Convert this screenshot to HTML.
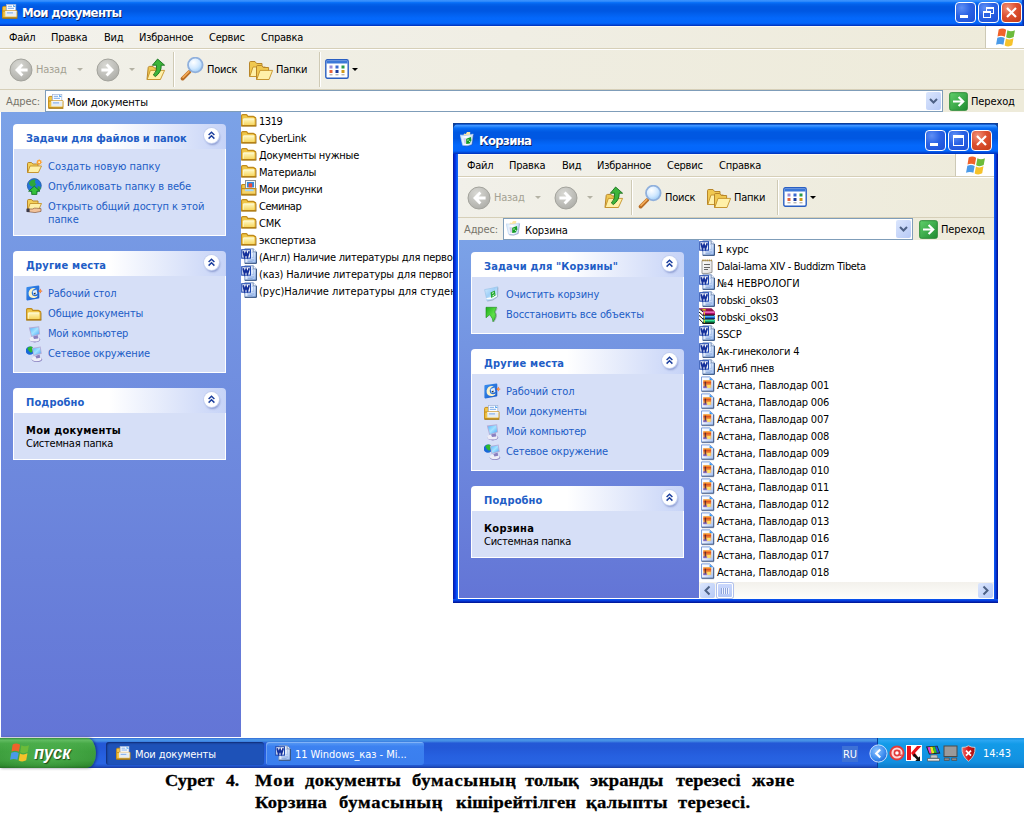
<!DOCTYPE html>
<html lang="ru">
<head>
<meta charset="utf-8">
<title>Мои документы</title>
<style>
*{box-sizing:border-box;margin:0;padding:0}
html,body{width:1024px;height:824px;overflow:hidden;background:#fff}
body{position:relative;font-family:"DejaVu Sans Condensed","Liberation Sans",sans-serif;font-size:11px;letter-spacing:-.12px;line-height:13px;color:#000}
.fl{letter-spacing:-.25px}
.menu span,.tool span{letter-spacing:-.23px}
.abs{position:absolute}
.nw{white-space:nowrap}
svg{display:block}
i{display:block;position:absolute}
/* window chrome */
.title{position:absolute;left:0;top:0;right:0;background:linear-gradient(#3f96ff 0%,#2a86fb 6%,#0870f8 10%,#0462ea 16%,#0058e2 26%,#0057e2 42%,#0260ee 55%,#0468fb 70%,#0366fb 89%,#0250e0 94%,#0038c4 98%,#0038c4 100%)}
.title.t2{border-radius:7px 7px 0 0;background:linear-gradient(#0a3f9a 0%,#0a3f9a 3%,#1862dc 5%,#3f96ff 8%,#2a86fb 12%,#0870f8 16%,#0462ea 22%,#0058e2 30%,#0057e2 50%,#0260ee 60%,#0468fb 72%,#0366fb 90%,#0250e0 94%,#0038c4 98%,#0038c4 100%)}
.title .tt{position:absolute;color:#fff;font-family:"DejaVu Sans Condensed","Liberation Sans",sans-serif;font-weight:bold;font-size:13px;letter-spacing:-.66px;line-height:15px;white-space:nowrap;text-shadow:1px 1px 0 #0a246a}
.win2{background:#0831d9}
.bl{left:0;top:20px;bottom:0;width:5px;background:linear-gradient(90deg,#00218f 0%,#0325d2 25%,#0536e2 50%,#0a58f2 75%,#1468fa 100%)}
.br{right:0;top:20px;bottom:0;width:4px;background:linear-gradient(90deg,#0a5cf5 0%,#0742e2 35%,#0325b8 70%,#00138c 100%)}
.bb{left:0;right:0;bottom:0;height:4px;background:linear-gradient(#0a58f2 0%,#0742e2 35%,#0325b8 70%,#00138c 100%)}
.tb{position:absolute;width:21px;height:21px;border:1px solid #fff;border-radius:4px;background:radial-gradient(circle at 30% 25%,#5f8ff5 0%,#2a62e4 45%,#1d4fd6 100%)}
.tb.x{background:radial-gradient(circle at 30% 25%,#f0927a 0%,#dd5030 45%,#c23a16 100%)}
.menu{position:absolute;background:linear-gradient(90deg,#f3f2ec 0%,#f0eee4 50%,#eeebda 100%);border-top:1px solid #fcfbf4;border-bottom:1px solid #d6cfb8}
.menu span{position:absolute;top:4px;white-space:nowrap}
.flag{position:absolute;background:#fff;border-left:1px solid #cdc9b6}
.tool{position:absolute;background:linear-gradient(90deg,#f1f0e9 0%,#efede1 50%,#eeebda 100%);border-top:1px solid #fff;border-bottom:1px solid #d6cfb8}
.sep{width:2px;border-left:1px solid #cfcab5;border-right:1px solid #fff}
.dd{width:0;height:0;border:3px solid transparent;border-top:3px solid #000;border-bottom:0}
.dd.gray2{border-top-color:#b4b2a4}
.addr{position:absolute;background:linear-gradient(90deg,#f1f0e9 0%,#efede1 50%,#eeebda 100%)}
.addr .inp{position:absolute;background:#fff;border:1px solid #7f9db9}
.combo{position:absolute;width:15px;height:18px;border-radius:2px;border:0;background:linear-gradient(135deg,#dbe6fd,#b6c9f6)}
.gray{color:#a3a193}
.gray3{color:#77746a}
/* task pane */
.pane{position:absolute;background:linear-gradient(#7ba2e7,#6375d6);border-left:1px solid #fff}
.box{position:absolute}
.box .hd{position:absolute;left:0;top:0;right:0;height:25px;border-radius:4px 4px 0 0;background:linear-gradient(90deg,#fff 0%,#fff 45%,#c6d3f7 100%);color:#215dc6;font-weight:bold;font-size:11px}
.box .hd b{letter-spacing:.05px;position:absolute;left:13px;top:8px;white-space:nowrap}
.box .bd{position:absolute;left:0;top:25px;right:0;bottom:0;background:#d6dff7;border:1px solid #fff;border-top:0}
.box .lk{position:absolute;color:#215dc6;white-space:nowrap}
.chev{position:absolute;width:15px;height:15px;border-radius:50%;background:#fff;box-shadow:0 0 0 1px #c4d0f0,1px 2px 2px rgba(60,80,160,.45)}
/* scrollbar */
.hsb{position:absolute;background:linear-gradient(#f3f1ec,#fefefb)}
.sbtn{position:absolute;width:15px;height:15px;border-radius:2px;background:linear-gradient(135deg,#dbe6fd,#b6c9f6);border:0}
.sthumb{position:absolute;height:15px;border-radius:2px;background:linear-gradient(#c9d7fc,#b6c8f6);border:1px solid #fff;box-shadow:0 0 0 1px #b0c0ec}
.sthumb i{left:3px;top:4px;width:8px;height:6px;background:repeating-linear-gradient(90deg,#8ea4dc 0 1px,#eef3ff 1px 2px)}
/* taskbar */
#taskbar{height:30px !important;background:linear-gradient(#3168d5 0%,#4993e6 5%,#4590e6 10%,#2459d6 17%,#2358d6 32%,#2660e0 60%,#2964e2 85%,#2055cc 93%,#1a3aa0 100%)}
.start{position:absolute;left:0;top:0;width:96px;height:30px;border-radius:0 9px 9px 0/0 15px 15px 0;background:radial-gradient(ellipse at 45% 60%,rgba(90,190,90,.55) 0%,rgba(90,190,90,0) 70%),linear-gradient(#2f8f3a 0%,#62bc62 7%,#48aa48 18%,#3c9e3c 45%,#3a9a3a 75%,#2f8a2f 92%,#256f25 100%);box-shadow:1px 0 3px rgba(0,0,40,.5);color:#fff;font-family:"Liberation Sans","DejaVu Sans",sans-serif;font-style:italic;font-weight:bold;font-size:18px;line-height:22px;text-shadow:1px 1px 1px #1a4a1a}
.tbtn{position:absolute;top:4px;height:23px;border-radius:3px;background:linear-gradient(#5a9cf5,#3c81f0 20%,#3a7eee);color:#fff;box-shadow:inset 1px 1px 0 rgba(255,255,255,.25)}
.tbtn.on{background:#1e52b8;box-shadow:inset 1px 1px 2px rgba(0,0,40,.5)}
.tray{position:absolute;top:0;height:30px;background:linear-gradient(#1a8fe0 0%,#2aa6f2 8%,#139be8 20%,#1290e0 80%,#0d78c8 100%);border-left:1px solid #0a3f9a}
#cap{font-family:"Liberation Serif","DejaVu Serif",serif;font-weight:bold;font-size:17.33px;line-height:20px;color:#000}
#cap span{transform-origin:0 0;-webkit-text-stroke:.3px #000}
</style>
</head>
<body>

<!-- main window: Мои документы -->
<div id="w1" class="abs" style="left:0;top:0;width:1024px;height:738px;background:#fff"><div class="title" style="height:26px"><div class="abs" style="left:2px;top:4px;"><svg width="16" height="16" viewBox="0 0 16 16" ><path d="M.6 13.6V3.4Q.6 2.4 1.8 2.4H4.4V13.6Z" fill="#f2c648" stroke="#c48e1c" stroke-width="1"/><rect x="4.4" y=".4" width="9.4" height="8.4" fill="#fff" stroke="#9fb2d6" stroke-width=".7"/><path d="M11.2 .4L13.8 3H11.2Z" fill="#4aa0f0"/><path d="M5.8 2.3H10M5.8 4.3H12" stroke="#78a8e8" stroke-width="1"/><path d="M.7 13.7V7H3.2V6.8H15V13.7Z" fill="#f2c648" stroke="#c48e1c" stroke-width="1"/><rect x="3.3" y="7.1" width="11.2" height="5.4" fill="#e6edf4"/><path d="M3.3 7.3H14.5" stroke="#fff" stroke-width=".8"/><path d="M5 8.9H11" stroke="#78a8e8" stroke-width="1"/><path d="M.4 14.3H15.4" stroke="#a87810" stroke-width="1"/></svg></div><span class="tt" style="left:22px;top:5px">Мои документы</span><div class="tb" style="left:955px;top:2px"><i style="position:absolute;left:4px;top:12px;width:8px;height:3px;background:#fff"></i></div><div class="tb" style="left:978px;top:2px"><i style="position:absolute;left:7px;top:4px;width:8px;height:7px;border:1px solid #fff;border-top-width:2px"></i><i style="position:absolute;left:4px;top:8px;width:8px;height:7px;border:1px solid #fff;border-top-width:2px;background:#2a62e4"></i></div><div class="tb x" style="left:1001px;top:2px"><svg width="19" height="19" viewBox="0 0 19 19" style="position:absolute;left:0;top:0"><path d="M5 5L14 14M14 5L5 14" stroke="#fff" stroke-width="2.2"/></svg></div><i style="right:0;top:0;width:2px;height:26px;background:linear-gradient(90deg,#0a4ad8,#0028a0)"></i></div><div class="menu" style="left:0;top:26px;width:1024px;height:23px"><span style="left:9px">Файл</span><span style="left:51px">Правка</span><span style="left:104px">Вид</span><span style="left:139px">Избранное</span><span style="left:209px">Сервис</span><span style="left:261px">Справка</span></div><div class="flag" style="left:985px;top:26px;width:39px;height:22px"><div class="abs" style="left:9px;top:1px;"><svg width="21" height="21" viewBox="0 0 20 20" ><path d="M3.5 2.4Q7 .6 10.6 2.6L9.4 9.2Q6 7.4 2.4 9Z" fill="#f0622a"/><path d="M11.8 3.2Q15.4 5 19 3L17.8 9.6Q14.2 11.6 10.6 9.8Z" fill="#6cbb3a"/><path d="M2.2 10.2Q5.8 8.6 9.2 10.4L8 17Q4.6 15.2 1 17Z" fill="#4a9ae8"/><path d="M10.4 11Q14 12.8 17.6 10.8L16.4 17.4Q12.8 19.4 9.2 17.6Z" fill="#f6c22a"/></svg></div></div><div class="tool" style="left:0;top:49px;width:1024px;height:41px"><div class="abs" style="left:9px;top:8px;"><svg width="24" height="24" viewBox="0 0 24 24" ><radialGradient id="bk3" cx=".4" cy=".3" r=".8"><stop offset="0" stop-color="#d9d9d4"/><stop offset=".6" stop-color="#bdbdb8"/><stop offset="1" stop-color="#a9a9a4"/></radialGradient><circle cx="12" cy="12" r="11" fill="url(#bk3)" stroke="#a3a39c" stroke-width="1"/><path d="M12.4 5.6L6 12L12.4 18.4L14.4 16.4L11.6 13.6H18.6V10.4H11.6L14.4 7.6Z" fill="#fff"/></svg></div><span class="abs nw gray" style="left:36px;top:13px;">Назад</span><i class="dd gray2" style="left:77px;top:18px"></i><div class="abs" style="left:96px;top:8px;"><svg width="24" height="24" viewBox="0 0 24 24" ><radialGradient id="fw4" cx=".4" cy=".3" r=".8"><stop offset="0" stop-color="#d9d9d4"/><stop offset=".6" stop-color="#bdbdb8"/><stop offset="1" stop-color="#a9a9a4"/></radialGradient><circle cx="12" cy="12" r="11" fill="url(#fw4)" stroke="#a3a39c" stroke-width="1"/><path d="M11.6 5.6L18 12L11.6 18.4L9.6 16.4L12.4 13.6H5.4V10.4H12.4L9.6 7.6Z" fill="#fff"/></svg></div><i class="dd gray2" style="left:129px;top:18px"></i><div class="abs" style="left:145px;top:8px;"><svg width="22" height="24" viewBox="0 0 22 24" ><path d="M2 21.5L3.2 9.5Q3.4 8.4 4.6 8.4H8L9.4 10H15V21.5Z" fill="#f0c850" stroke="#b8862a"/><path d="M2.2 21.5L5.4 12.4H19.6L15.4 21.5Z" fill="#fff0a8" stroke="#c4922a" stroke-width=".9"/><path d="M12.6 1L19.6 7.2H16.2Q16.6 14 10.4 18.6L8.4 17Q12.4 13 11.6 7.2H7.4Z" fill="#3cb53a" stroke="#17701c" stroke-width=".9" stroke-linejoin="round"/></svg></div><i class="sep" style="left:173px;top:2px;height:35px"></i><div class="abs" style="left:180px;top:7px;"><svg width="24" height="24" viewBox="0 0 24 24" ><path d="M9.2 15L2.6 21.6" stroke="#b86c24" stroke-width="3.8" stroke-linecap="round"/><path d="M8.8 14.6L3 20.4" stroke="#f4ac58" stroke-width="1.5" stroke-linecap="round"/><radialGradient id="sr6" cx=".38" cy=".32" r=".75"><stop offset="0" stop-color="#ffffff"/><stop offset=".55" stop-color="#d2e9ff"/><stop offset="1" stop-color="#96c8f6"/></radialGradient><circle cx="15.3" cy="8" r="7.3" fill="url(#sr6)" stroke="#90b0dc" stroke-width="1.8"/></svg></div><span class="abs nw" style="left:207px;top:13px;">Поиск</span><div class="abs" style="left:248px;top:9px;"><svg width="26" height="22" viewBox="0 0 26 22" ><path d="M1.5 17.5V3.5Q1.5 2.5 2.8 2.5H7L8.6 4.5H14V17.5Z" fill="#f0c850" stroke="#b8862a"/><path d="M1.8 17.5L5 8H17.4L14 17.5Z" fill="#fff0a8" stroke="#c4922a" stroke-width=".9"/><path d="M8.5 20.5V7.5Q8.5 6.5 9.8 6.5H13.6L15.2 8.5H20.6V20.5Z" fill="#f0c850" stroke="#b8862a"/><path d="M8.8 20.5L12 11.4H24.6L21 20.5Z" fill="#fff0a8" stroke="#c4922a" stroke-width=".9"/></svg></div><span class="abs nw" style="left:276px;top:13px;">Папки</span><i class="sep" style="left:319px;top:2px;height:35px"></i><div class="abs" style="left:325px;top:9px;"><svg width="24" height="20" viewBox="0 0 24 20" ><rect x=".8" y=".8" width="22.4" height="18.4" rx="1.5" fill="#fff" stroke="#2a5fc2" stroke-width="1.4"/><rect x="1.5" y="1.5" width="21" height="3" fill="#3c78d8"/><rect x="4.5" y="6.5" width="3" height="3" fill="#9a8ad8"/><rect x="10.5" y="6.5" width="3" height="3" fill="#3a6ad0"/><rect x="16.5" y="6.5" width="3" height="3" fill="#2a9a4a"/><rect x="4.5" y="11" width="3" height="3" fill="#e8623a"/><rect x="10.5" y="11" width="3" height="3" fill="#1a3a9a"/><rect x="16.5" y="11" width="3" height="3" fill="#d09a1a"/><path d="M4.5 15.8H7.5M10.5 15.8H13.5M16.5 15.8H19.5" stroke="#999" stroke-width="1"/></svg></div><i class="dd" style="left:352px;top:18px"></i></div><div class="addr" style="left:0;top:90px;width:1024px;height:22px"><span class="abs nw gray3" style="left:6px;top:5px;">Адрес:</span><div class="inp" style="left:45px;top:0;width:898px;height:22px"><div class="abs" style="left:2px;top:3px;"><svg width="16" height="16" viewBox="0 0 16 16" ><path d="M.6 13.6V3.4Q.6 2.4 1.8 2.4H4.4V13.6Z" fill="#f2c648" stroke="#c48e1c" stroke-width="1"/><rect x="4.4" y=".4" width="9.4" height="8.4" fill="#fff" stroke="#9fb2d6" stroke-width=".7"/><path d="M11.2 .4L13.8 3H11.2Z" fill="#4aa0f0"/><path d="M5.8 2.3H10M5.8 4.3H12" stroke="#78a8e8" stroke-width="1"/><path d="M.7 13.7V7H3.2V6.8H15V13.7Z" fill="#f2c648" stroke="#c48e1c" stroke-width="1"/><rect x="3.3" y="7.1" width="11.2" height="5.4" fill="#e6edf4"/><path d="M3.3 7.3H14.5" stroke="#fff" stroke-width=".8"/><path d="M5 8.9H11" stroke="#78a8e8" stroke-width="1"/><path d="M.4 14.3H15.4" stroke="#a87810" stroke-width="1"/></svg></div><span class="abs nw" style="left:21px;top:5px;">Мои документы</span><div class="combo" style="right:1px;top:1px"><svg width="15" height="18" viewBox="0 0 15 18"><path d="M4 7L7.5 10.5L11 7" fill="none" stroke="#4d6185" stroke-width="2"/></svg></div></div><div class="abs" style="left:949px;top:2px;"><svg width="19" height="19" viewBox="0 0 19 19" ><linearGradient id="go10" x1="0" y1="0" x2="1" y2="1"><stop offset="0" stop-color="#5fd06a"/><stop offset="1" stop-color="#1f8a30"/></linearGradient><rect x=".7" y=".7" width="17.6" height="17.6" rx="1.6" fill="url(#go10)" stroke="#2a8a36" stroke-width="1"/><path d="M4 9.5H13.5M9.6 5L14.2 9.5L9.6 14" fill="none" stroke="#fff" stroke-width="2.2"/></svg></div><span class="abs nw" style="left:971px;top:5px;">Переход</span></div>
<div class="pane" style="left:0;top:112px;width:241px;height:625px"><div class="box" style="left:12px;top:12px;width:213px;height:112px"><div class="hd"><b style="letter-spacing:-0.05px">Задачи для файлов и папок</b></div><div class="chev" style="left:191px;top:3.5px"><svg width="15" height="15" viewBox="0 0 15 15"><path d="M4.6 7L7.5 4.2L10.4 7M4.6 10.6L7.5 7.8L10.4 10.6" fill="none" stroke="#1c3f9e" stroke-width="1.5"/></svg></div><div class="bd"><div class="abs" style="left:12px;top:10px;"><svg width="17" height="15" viewBox="0 0 17 15" ><path d="M1.5 13.5V4.5Q1.5 3.5 2.8 3.5H5.5L6.8 5H12V13.5Z" fill="#f3cf58" stroke="#b8862a"/><path d="M1.8 13.5L4 7H15.5L12.4 13.5Z" fill="#fff0a8" stroke="#c4922a" stroke-width=".9"/><circle cx="13.2" cy="3.2" r="2.2" fill="#ff8a1a"/><path d="M13.2 0V6.4M10 3.2H16.4M11 1L15.4 5.4M15.4 1L11 5.4" stroke="#ffb03a" stroke-width=".7"/><circle cx="13.2" cy="3.2" r="1" fill="#fff2c0"/></svg></div><span class="lk" style="left:34px;top:11px;letter-spacing:0px">Создать новую папку</span><div class="abs" style="left:12px;top:29px;"><svg width="17" height="17" viewBox="0 0 17 17" ><circle cx="8.3" cy="7.6" r="7" fill="#2274dc" stroke="#1a4f98" stroke-width=".7"/><path d="M3.2 4.2Q6 .8 9.8 1.8Q8 4.6 10.4 6.6Q7.4 10 4.6 8Q2.4 6.6 3.2 4.2Z" fill="#2ea83a"/><path d="M11.5 8.5Q14.4 7.6 14.8 10.4Q13.4 13 11.6 12Z" fill="#2ea83a"/><path d="M8.3 8.2L14 13.2H10.9V16.4H5.7V13.2H2.6Z" fill="#35c23a" stroke="#0f6e1c" stroke-width=".8"/></svg></div><span class="lk" style="left:34px;top:31px;letter-spacing:-0.07px">Опубликовать папку в вебе</span><div class="abs" style="left:12px;top:49px;"><svg width="17" height="16" viewBox="0 0 17 16" ><path d="M1.5 12.5V2.5Q1.5 1.5 2.8 1.5H5.5L6.8 3H12V12.5Z" fill="#f3cf58" stroke="#b8862a"/><path d="M1.8 12.5L4 5.5H15.5L12.4 12.5Z" fill="#fff0a8" stroke="#c4922a" stroke-width=".9"/><path d="M1 11H6.5Q8.5 9.6 10.5 10.2L15 10.6V13.4L9 14.6L1 13.6Z" fill="#f2c29a" stroke="#7a4a2a" stroke-width=".6"/><rect x=".6" y="10.6" width="3" height="3.4" fill="#3a3a4a"/></svg></div><span class="lk" style="left:34px;top:51px;letter-spacing:-0.07px">Открыть общий доступ к этой<br>папке</span></div></div><div class="box" style="left:12px;top:139px;width:213px;height:122px"><div class="hd"><b style="letter-spacing:0.21px">Другие места</b></div><div class="chev" style="left:191px;top:3.5px"><svg width="15" height="15" viewBox="0 0 15 15"><path d="M4.6 7L7.5 4.2L10.4 7M4.6 10.6L7.5 7.8L10.4 10.6" fill="none" stroke="#1c3f9e" stroke-width="1.5"/></svg></div><div class="bd"><div class="abs" style="left:12px;top:9px;"><svg width="17" height="17" viewBox="0 0 17 17" ><linearGradient id="dk14" x1="0" y1="0" x2="1" y2="1"><stop offset="0" stop-color="#3a90f0"/><stop offset="1" stop-color="#1a5ac8"/></linearGradient><path d="M.4 2.8Q.4 2 1.4 1.9L12.4 .6Q13.3 .6 13.3 1.5V12.6Q13.3 13.4 12.4 13.6L1.4 15.4Q.4 15.5 .4 14.6Z" fill="url(#dk14)"/><path d="M9.8 3.2Q4 2.2 2.6 7.4Q2.2 12.4 7 13Q10.6 13 11.8 10.4Q8.6 12 6.4 10.2Q4.6 7 7.4 4.6Q8.6 3.6 9.8 3.2Z" fill="#fff3c4"/><path d="M6.6 6L10.6 4.4L11.4 9L7.6 10.2Z" fill="#dcecff"/><path d="M7.6 8.6L9.4 7.4L9.6 9L8 9.4Z" fill="#222"/><path d="M14.3 3.6L15 5.4L16.8 6.1L15 6.8L14.3 8.6L13.6 6.8L11.8 6.1L13.6 5.4Z" fill="#f0521a"/><circle cx="14.3" cy="6.1" r=".8" fill="#ffc040"/></svg></div><span class="lk" style="left:34px;top:11px;letter-spacing:-0.1px">Рабочий стол</span><div class="abs" style="left:11px;top:31px;"><svg width="17" height="14" viewBox="0 0 17 14" ><linearGradient id="fg15" x1="0" y1="0" x2="0" y2="1"><stop offset="0" stop-color="#fffac8"/><stop offset="1" stop-color="#f6d660"/></linearGradient><path d="M1.6 12.4V2.6Q1.6 1.6 2.7 1.6H5.9Q6.9 1.6 7.3 2.4L7.8 3.4H13.3Q14.5 3.4 14.5 4.4H15Q15.8 4.5 15.8 5.4V12.4Z" fill="#efc648" stroke="#c08a1c" stroke-width="1.1"/><path d="M3 12V6.2Q3 5.5 3.9 5.5H14.4V12Z" fill="url(#fg15)"/><path d="M3.3 11.8V6.4Q3.3 5.9 3.9 5.9H14" fill="none" stroke="#fffbe0" stroke-width=".7"/><path d="M1.2 13.1H16.2" stroke="#a87810" stroke-width="1.1"/><path d="M16.6 6V13.6" stroke="#7a7a7a" stroke-width=".6" opacity=".45"/></svg></div><span class="lk" style="left:34px;top:31px;letter-spacing:-0.13px">Общие документы</span><div class="abs" style="left:12px;top:50px;"><svg width="16" height="17" viewBox="0 0 16 17" ><linearGradient id="cs16" x1="0" y1="0" x2="1" y2="1"><stop offset="0" stop-color="#58b8ff"/><stop offset=".5" stop-color="#a4e2ff"/><stop offset="1" stop-color="#4aa8f8"/></linearGradient><ellipse cx="8.8" cy="13.6" rx="5.4" ry="2.8" fill="#6a5aa8" opacity=".75"/><ellipse cx="8.4" cy="13" rx="5.2" ry="2.6" fill="#eeeef8"/><path d="M7 10.4L11.6 9L12.2 12.4L8 13Z" fill="#8a80c0"/><path d="M2.8 1.6L13.1 .2L14.1 8.3L5.3 11.1Z" fill="#b4acd8"/><path d="M3.9 2.4L12.4 1.2L13.1 7.7L5.9 9.9Z" fill="url(#cs16)"/></svg></div><span class="lk" style="left:34px;top:51px;letter-spacing:-0.17px">Мой компьютер</span><div class="abs" style="left:12px;top:69px;"><svg width="17" height="17" viewBox="0 0 17 17" ><linearGradient id="ns17" x1="0" y1="0" x2="1" y2="1"><stop offset="0" stop-color="#58b8ff"/><stop offset=".5" stop-color="#a4e2ff"/><stop offset="1" stop-color="#4aa8f8"/></linearGradient><circle cx="3.9" cy="5.6" r="4.2" fill="#1868d8"/><path d="M1.4 3Q3.4 .8 6.2 1.8Q7.6 4 6.4 6.4Q5 8.6 3.6 6.8Q2 5.6 1.4 3Z" fill="#2cb82c"/><ellipse cx="11" cy="14.3" rx="5.1" ry="2.6" fill="#6a5aa8" opacity=".75"/><ellipse cx="10.7" cy="13.8" rx="4.9" ry="2.4" fill="#eeeef8"/><path d="M9.4 11L13.6 9.6L14.2 12.8L10.4 13.6Z" fill="#8a80c0"/><path d="M5.9 2.9L14.6 1.4L15.8 8.7L7.6 11.1Z" fill="#b4acd8"/><path d="M6.9 3.7L13.9 2.4L14.8 8.1L8.2 10Z" fill="url(#ns17)"/></svg></div><span class="lk" style="left:34px;top:71px;letter-spacing:-0.13px">Сетевое окружение</span></div></div><div class="box" style="left:12px;top:276px;width:213px;height:72px"><div class="hd"><b style="letter-spacing:0.12px">Подробно</b></div><div class="chev" style="left:191px;top:3.5px"><svg width="15" height="15" viewBox="0 0 15 15"><path d="M4.6 7L7.5 4.2L10.4 7M4.6 10.6L7.5 7.8L10.4 10.6" fill="none" stroke="#1c3f9e" stroke-width="1.5"/></svg></div><div class="bd"><span class="lk" style="left:12px;top:11px;color:#000;font-weight:bold;letter-spacing:.28px">Мои документы</span><span class="lk" style="left:12px;top:24px;color:#000;letter-spacing:-.25px">Системная папка</span></div></div></div>
<div class="abs" style="left:241px;top:112px;width:783px;height:626px"><div class="abs" style="left:-1px;top:1px;"><svg width="17" height="14" viewBox="0 0 17 14" ><linearGradient id="fg18" x1="0" y1="0" x2="0" y2="1"><stop offset="0" stop-color="#fffac8"/><stop offset="1" stop-color="#f6d660"/></linearGradient><path d="M1.6 12.4V2.6Q1.6 1.6 2.7 1.6H5.9Q6.9 1.6 7.3 2.4L7.8 3.4H13.3Q14.5 3.4 14.5 4.4H15Q15.8 4.5 15.8 5.4V12.4Z" fill="#efc648" stroke="#c08a1c" stroke-width="1.1"/><path d="M3 12V6.2Q3 5.5 3.9 5.5H14.4V12Z" fill="url(#fg18)"/><path d="M3.3 11.8V6.4Q3.3 5.9 3.9 5.9H14" fill="none" stroke="#fffbe0" stroke-width=".7"/><path d="M1.2 13.1H16.2" stroke="#a87810" stroke-width="1.1"/><path d="M16.6 6V13.6" stroke="#7a7a7a" stroke-width=".6" opacity=".45"/></svg></div><span class="abs nw fl" style="left:18px;top:3px;letter-spacing:-.45px">1319</span><div class="abs" style="left:-1px;top:18px;"><svg width="17" height="14" viewBox="0 0 17 14" ><linearGradient id="fg19" x1="0" y1="0" x2="0" y2="1"><stop offset="0" stop-color="#fffac8"/><stop offset="1" stop-color="#f6d660"/></linearGradient><path d="M1.6 12.4V2.6Q1.6 1.6 2.7 1.6H5.9Q6.9 1.6 7.3 2.4L7.8 3.4H13.3Q14.5 3.4 14.5 4.4H15Q15.8 4.5 15.8 5.4V12.4Z" fill="#efc648" stroke="#c08a1c" stroke-width="1.1"/><path d="M3 12V6.2Q3 5.5 3.9 5.5H14.4V12Z" fill="url(#fg19)"/><path d="M3.3 11.8V6.4Q3.3 5.9 3.9 5.9H14" fill="none" stroke="#fffbe0" stroke-width=".7"/><path d="M1.2 13.1H16.2" stroke="#a87810" stroke-width="1.1"/><path d="M16.6 6V13.6" stroke="#7a7a7a" stroke-width=".6" opacity=".45"/></svg></div><span class="abs nw fl" style="left:18px;top:20px;">CyberLink</span><div class="abs" style="left:-1px;top:35px;"><svg width="17" height="14" viewBox="0 0 17 14" ><linearGradient id="fg20" x1="0" y1="0" x2="0" y2="1"><stop offset="0" stop-color="#fffac8"/><stop offset="1" stop-color="#f6d660"/></linearGradient><path d="M1.6 12.4V2.6Q1.6 1.6 2.7 1.6H5.9Q6.9 1.6 7.3 2.4L7.8 3.4H13.3Q14.5 3.4 14.5 4.4H15Q15.8 4.5 15.8 5.4V12.4Z" fill="#efc648" stroke="#c08a1c" stroke-width="1.1"/><path d="M3 12V6.2Q3 5.5 3.9 5.5H14.4V12Z" fill="url(#fg20)"/><path d="M3.3 11.8V6.4Q3.3 5.9 3.9 5.9H14" fill="none" stroke="#fffbe0" stroke-width=".7"/><path d="M1.2 13.1H16.2" stroke="#a87810" stroke-width="1.1"/><path d="M16.6 6V13.6" stroke="#7a7a7a" stroke-width=".6" opacity=".45"/></svg></div><span class="abs nw fl" style="left:18px;top:37px;">Документы нужные</span><div class="abs" style="left:-1px;top:52px;"><svg width="17" height="14" viewBox="0 0 17 14" ><linearGradient id="fg21" x1="0" y1="0" x2="0" y2="1"><stop offset="0" stop-color="#fffac8"/><stop offset="1" stop-color="#f6d660"/></linearGradient><path d="M1.6 12.4V2.6Q1.6 1.6 2.7 1.6H5.9Q6.9 1.6 7.3 2.4L7.8 3.4H13.3Q14.5 3.4 14.5 4.4H15Q15.8 4.5 15.8 5.4V12.4Z" fill="#efc648" stroke="#c08a1c" stroke-width="1.1"/><path d="M3 12V6.2Q3 5.5 3.9 5.5H14.4V12Z" fill="url(#fg21)"/><path d="M3.3 11.8V6.4Q3.3 5.9 3.9 5.9H14" fill="none" stroke="#fffbe0" stroke-width=".7"/><path d="M1.2 13.1H16.2" stroke="#a87810" stroke-width="1.1"/><path d="M16.6 6V13.6" stroke="#7a7a7a" stroke-width=".6" opacity=".45"/></svg></div><span class="abs nw fl" style="left:18px;top:54px;">Материалы</span><div class="abs" style="left:-1px;top:68px;"><svg width="17" height="16" viewBox="0 0 17 16" ><path d="M1.6 14.4V5.4Q1.6 4.5 2.8 4.5H5.5V14.4Z" fill="#efc648" stroke="#c08a1c" stroke-width="1.1"/><rect x="5.5" y=".5" width="10" height="10" fill="#f4f4f4" stroke="#8e8e8e"/><rect x="7" y="2" width="7" height="5.4" fill="#2d8be0"/><rect x="8.6" y="3.4" width="3.6" height="4" fill="#ee4a3a"/><path d="M1.6 14.4V8.6H15.8V14.4Z" fill="#f5d468" stroke="#c08a1c" stroke-width="1.1"/><rect x="5" y="9.2" width="8.6" height="2" fill="#a8d6f8"/><path d="M1.2 15.1H16.2" stroke="#a87810" stroke-width="1.1"/><path d="M16.6 8V15.6" stroke="#7a7a7a" stroke-width=".6" opacity=".45"/></svg></div><span class="abs nw fl" style="left:18px;top:71px;letter-spacing:-.33px">Мои рисунки</span><div class="abs" style="left:-1px;top:86px;"><svg width="17" height="14" viewBox="0 0 17 14" ><linearGradient id="fg23" x1="0" y1="0" x2="0" y2="1"><stop offset="0" stop-color="#fffac8"/><stop offset="1" stop-color="#f6d660"/></linearGradient><path d="M1.6 12.4V2.6Q1.6 1.6 2.7 1.6H5.9Q6.9 1.6 7.3 2.4L7.8 3.4H13.3Q14.5 3.4 14.5 4.4H15Q15.8 4.5 15.8 5.4V12.4Z" fill="#efc648" stroke="#c08a1c" stroke-width="1.1"/><path d="M3 12V6.2Q3 5.5 3.9 5.5H14.4V12Z" fill="url(#fg23)"/><path d="M3.3 11.8V6.4Q3.3 5.9 3.9 5.9H14" fill="none" stroke="#fffbe0" stroke-width=".7"/><path d="M1.2 13.1H16.2" stroke="#a87810" stroke-width="1.1"/><path d="M16.6 6V13.6" stroke="#7a7a7a" stroke-width=".6" opacity=".45"/></svg></div><span class="abs nw fl" style="left:18px;top:88px;letter-spacing:-.5px">Семинар</span><div class="abs" style="left:-1px;top:103px;"><svg width="17" height="14" viewBox="0 0 17 14" ><linearGradient id="fg24" x1="0" y1="0" x2="0" y2="1"><stop offset="0" stop-color="#fffac8"/><stop offset="1" stop-color="#f6d660"/></linearGradient><path d="M1.6 12.4V2.6Q1.6 1.6 2.7 1.6H5.9Q6.9 1.6 7.3 2.4L7.8 3.4H13.3Q14.5 3.4 14.5 4.4H15Q15.8 4.5 15.8 5.4V12.4Z" fill="#efc648" stroke="#c08a1c" stroke-width="1.1"/><path d="M3 12V6.2Q3 5.5 3.9 5.5H14.4V12Z" fill="url(#fg24)"/><path d="M3.3 11.8V6.4Q3.3 5.9 3.9 5.9H14" fill="none" stroke="#fffbe0" stroke-width=".7"/><path d="M1.2 13.1H16.2" stroke="#a87810" stroke-width="1.1"/><path d="M16.6 6V13.6" stroke="#7a7a7a" stroke-width=".6" opacity=".45"/></svg></div><span class="abs nw fl" style="left:18px;top:105px;">СМК</span><div class="abs" style="left:-1px;top:120px;"><svg width="17" height="14" viewBox="0 0 17 14" ><linearGradient id="fg25" x1="0" y1="0" x2="0" y2="1"><stop offset="0" stop-color="#fffac8"/><stop offset="1" stop-color="#f6d660"/></linearGradient><path d="M1.6 12.4V2.6Q1.6 1.6 2.7 1.6H5.9Q6.9 1.6 7.3 2.4L7.8 3.4H13.3Q14.5 3.4 14.5 4.4H15Q15.8 4.5 15.8 5.4V12.4Z" fill="#efc648" stroke="#c08a1c" stroke-width="1.1"/><path d="M3 12V6.2Q3 5.5 3.9 5.5H14.4V12Z" fill="url(#fg25)"/><path d="M3.3 11.8V6.4Q3.3 5.9 3.9 5.9H14" fill="none" stroke="#fffbe0" stroke-width=".7"/><path d="M1.2 13.1H16.2" stroke="#a87810" stroke-width="1.1"/><path d="M16.6 6V13.6" stroke="#7a7a7a" stroke-width=".6" opacity=".45"/></svg></div><span class="abs nw fl" style="left:18px;top:122px;">экспертиза</span><div class="abs" style="left:-1px;top:136px;"><svg width="18" height="17" viewBox="0 0 18 17" ><linearGradient id="wg26" x1="0" y1="0" x2="1" y2="1"><stop offset="0" stop-color="#ffffff"/><stop offset=".55" stop-color="#dce8fb"/><stop offset="1" stop-color="#8fb4ee"/></linearGradient><path d="M4.8 .8H13.2L16.3 3.9V15.2H4.8Z" fill="url(#wg26)" stroke="#6f8fc4" stroke-width=".9"/><path d="M16.4 4V15.3H4.8" fill="none" stroke="#34507c" stroke-width="1"/><path d="M13.2 .8V3.9H16.3" fill="#f4f8ff" stroke="#4d6a9a" stroke-width=".7"/><path d="M7.5 12H14M7.5 13.6H12.6" stroke="#7d9fd8" stroke-width=".8"/><path d="M11.8 4.4H13.6V9.6H11.8" fill="none" stroke="#9db8e4" stroke-width=".7"/><rect x="1.75" y="1.75" width="8.7" height="8.4" fill="#fff" stroke="#1d47b0" stroke-width="1.1"/><path d="M3.2 3.2L4.5 8.7L6.1 4.6L7.5 8.7L9.2 3.2" fill="none" stroke="#14309a" stroke-width="1.8" stroke-linejoin="miter"/></svg></div><span class="abs nw fl" style="left:18px;top:139px;">(Англ) Наличие литературы для первого курса</span><div class="abs" style="left:-1px;top:153px;"><svg width="18" height="17" viewBox="0 0 18 17" ><linearGradient id="wg27" x1="0" y1="0" x2="1" y2="1"><stop offset="0" stop-color="#ffffff"/><stop offset=".55" stop-color="#dce8fb"/><stop offset="1" stop-color="#8fb4ee"/></linearGradient><path d="M4.8 .8H13.2L16.3 3.9V15.2H4.8Z" fill="url(#wg27)" stroke="#6f8fc4" stroke-width=".9"/><path d="M16.4 4V15.3H4.8" fill="none" stroke="#34507c" stroke-width="1"/><path d="M13.2 .8V3.9H16.3" fill="#f4f8ff" stroke="#4d6a9a" stroke-width=".7"/><path d="M7.5 12H14M7.5 13.6H12.6" stroke="#7d9fd8" stroke-width=".8"/><path d="M11.8 4.4H13.6V9.6H11.8" fill="none" stroke="#9db8e4" stroke-width=".7"/><rect x="1.75" y="1.75" width="8.7" height="8.4" fill="#fff" stroke="#1d47b0" stroke-width="1.1"/><path d="M3.2 3.2L4.5 8.7L6.1 4.6L7.5 8.7L9.2 3.2" fill="none" stroke="#14309a" stroke-width="1.8" stroke-linejoin="miter"/></svg></div><span class="abs nw fl" style="left:18px;top:156px;letter-spacing:-.15px">(каз) Наличие литературы для первого курса</span><div class="abs" style="left:-1px;top:170px;"><svg width="18" height="17" viewBox="0 0 18 17" ><linearGradient id="wg28" x1="0" y1="0" x2="1" y2="1"><stop offset="0" stop-color="#ffffff"/><stop offset=".55" stop-color="#dce8fb"/><stop offset="1" stop-color="#8fb4ee"/></linearGradient><path d="M4.8 .8H13.2L16.3 3.9V15.2H4.8Z" fill="url(#wg28)" stroke="#6f8fc4" stroke-width=".9"/><path d="M16.4 4V15.3H4.8" fill="none" stroke="#34507c" stroke-width="1"/><path d="M13.2 .8V3.9H16.3" fill="#f4f8ff" stroke="#4d6a9a" stroke-width=".7"/><path d="M7.5 12H14M7.5 13.6H12.6" stroke="#7d9fd8" stroke-width=".8"/><path d="M11.8 4.4H13.6V9.6H11.8" fill="none" stroke="#9db8e4" stroke-width=".7"/><rect x="1.75" y="1.75" width="8.7" height="8.4" fill="#fff" stroke="#1d47b0" stroke-width="1.1"/><path d="M3.2 3.2L4.5 8.7L6.1 4.6L7.5 8.7L9.2 3.2" fill="none" stroke="#14309a" stroke-width="1.8" stroke-linejoin="miter"/></svg></div><span class="abs nw fl" style="left:18px;top:173px;letter-spacing:0">(рус)Наличие литературы для студентов</span></div></div>

<!-- second window: Корзина -->
<div id="w2" class="abs win2" style="left:453px;top:123px;width:545px;height:480px"><div class="abs" style="left:0;top:0;width:545px;height:9px;background:#0d3f9a"></div><i class="bl"></i><i class="br"></i><i class="bb"></i><div class="title t2" style="height:31px"><div class="abs" style="left:7px;top:8px;"><svg width="16" height="16" viewBox="0 0 16 16" ><linearGradient id="bg29" x1="0" y1="0" x2="1" y2="0"><stop offset="0" stop-color="#d4e8fa"/><stop offset=".45" stop-color="#ffffff"/><stop offset="1" stop-color="#c4dcf4"/></linearGradient><path d="M3 4.4L4.4 2.6L5.8 2.9L7 1.1H10.2V4.6Z" fill="#ffe6a0"/><path d="M.2 3.9Q6.6 5.2 13.2 3.1L11.7 13.4Q7 15.8 2.6 14.2Z" fill="url(#bg29)" stroke="#b8d0ee" stroke-width=".6"/><path d="M3.4 7.4L5.8 7L6 12.4L4.4 12.8Z" fill="#c4b4e6" opacity=".7"/><path d="M6.2 7.8L11 6.1L11.3 9.6L9.7 12.4L6.2 13Z" fill="#149c26"/><path d="M7.4 9.2L8.6 8.8M9.2 10.6L10.2 10.2" stroke="#f0fff0" stroke-width="1.1"/><path d="M13.6 3.6L12.2 13.6Q8 16 3.4 14.8" fill="none" stroke="#203080" stroke-width=".7" opacity=".45"/></svg></div><span class="tt" style="left:26px;top:10px">Корзина</span><div class="tb" style="left:472px;top:7px"><i style="position:absolute;left:4px;top:12px;width:8px;height:3px;background:#fff"></i></div><div class="tb" style="left:495px;top:7px"><i style="position:absolute;left:4px;top:4px;width:11px;height:11px;border:1px solid #fff;border-top-width:3px"></i></div><div class="tb x" style="left:518px;top:7px"><svg width="19" height="19" viewBox="0 0 19 19" style="position:absolute;left:0;top:0"><path d="M5 5L14 14M14 5L5 14" stroke="#fff" stroke-width="2.2"/></svg></div></div><div class="abs" style="left:5px;top:31px;width:536px;height:445px;background:#fff;overflow:hidden"><div class="menu" style="left:0;top:0px;width:536px;height:23px"><span style="left:9px">Файл</span><span style="left:51px">Правка</span><span style="left:104px">Вид</span><span style="left:139px">Избранное</span><span style="left:209px">Сервис</span><span style="left:261px">Справка</span></div><div class="flag" style="left:497px;top:0px;width:39px;height:22px"><div class="abs" style="left:9px;top:1px;"><svg width="21" height="21" viewBox="0 0 20 20" ><path d="M3.5 2.4Q7 .6 10.6 2.6L9.4 9.2Q6 7.4 2.4 9Z" fill="#f0622a"/><path d="M11.8 3.2Q15.4 5 19 3L17.8 9.6Q14.2 11.6 10.6 9.8Z" fill="#6cbb3a"/><path d="M2.2 10.2Q5.8 8.6 9.2 10.4L8 17Q4.6 15.2 1 17Z" fill="#4a9ae8"/><path d="M10.4 11Q14 12.8 17.6 10.8L16.4 17.4Q12.8 19.4 9.2 17.6Z" fill="#f6c22a"/></svg></div></div><div class="tool" style="left:0;top:23px;width:536px;height:41px"><div class="abs" style="left:9px;top:8px;"><svg width="24" height="24" viewBox="0 0 24 24" ><radialGradient id="bk31" cx=".4" cy=".3" r=".8"><stop offset="0" stop-color="#d9d9d4"/><stop offset=".6" stop-color="#bdbdb8"/><stop offset="1" stop-color="#a9a9a4"/></radialGradient><circle cx="12" cy="12" r="11" fill="url(#bk31)" stroke="#a3a39c" stroke-width="1"/><path d="M12.4 5.6L6 12L12.4 18.4L14.4 16.4L11.6 13.6H18.6V10.4H11.6L14.4 7.6Z" fill="#fff"/></svg></div><span class="abs nw gray" style="left:36px;top:13px;">Назад</span><i class="dd gray2" style="left:77px;top:18px"></i><div class="abs" style="left:96px;top:8px;"><svg width="24" height="24" viewBox="0 0 24 24" ><radialGradient id="fw32" cx=".4" cy=".3" r=".8"><stop offset="0" stop-color="#d9d9d4"/><stop offset=".6" stop-color="#bdbdb8"/><stop offset="1" stop-color="#a9a9a4"/></radialGradient><circle cx="12" cy="12" r="11" fill="url(#fw32)" stroke="#a3a39c" stroke-width="1"/><path d="M11.6 5.6L18 12L11.6 18.4L9.6 16.4L12.4 13.6H5.4V10.4H12.4L9.6 7.6Z" fill="#fff"/></svg></div><i class="dd gray2" style="left:129px;top:18px"></i><div class="abs" style="left:145px;top:8px;"><svg width="22" height="24" viewBox="0 0 22 24" ><path d="M2 21.5L3.2 9.5Q3.4 8.4 4.6 8.4H8L9.4 10H15V21.5Z" fill="#f0c850" stroke="#b8862a"/><path d="M2.2 21.5L5.4 12.4H19.6L15.4 21.5Z" fill="#fff0a8" stroke="#c4922a" stroke-width=".9"/><path d="M12.6 1L19.6 7.2H16.2Q16.6 14 10.4 18.6L8.4 17Q12.4 13 11.6 7.2H7.4Z" fill="#3cb53a" stroke="#17701c" stroke-width=".9" stroke-linejoin="round"/></svg></div><i class="sep" style="left:173px;top:2px;height:35px"></i><div class="abs" style="left:180px;top:7px;"><svg width="24" height="24" viewBox="0 0 24 24" ><path d="M9.2 15L2.6 21.6" stroke="#b86c24" stroke-width="3.8" stroke-linecap="round"/><path d="M8.8 14.6L3 20.4" stroke="#f4ac58" stroke-width="1.5" stroke-linecap="round"/><radialGradient id="sr34" cx=".38" cy=".32" r=".75"><stop offset="0" stop-color="#ffffff"/><stop offset=".55" stop-color="#d2e9ff"/><stop offset="1" stop-color="#96c8f6"/></radialGradient><circle cx="15.3" cy="8" r="7.3" fill="url(#sr34)" stroke="#90b0dc" stroke-width="1.8"/></svg></div><span class="abs nw" style="left:207px;top:13px;">Поиск</span><div class="abs" style="left:248px;top:9px;"><svg width="26" height="22" viewBox="0 0 26 22" ><path d="M1.5 17.5V3.5Q1.5 2.5 2.8 2.5H7L8.6 4.5H14V17.5Z" fill="#f0c850" stroke="#b8862a"/><path d="M1.8 17.5L5 8H17.4L14 17.5Z" fill="#fff0a8" stroke="#c4922a" stroke-width=".9"/><path d="M8.5 20.5V7.5Q8.5 6.5 9.8 6.5H13.6L15.2 8.5H20.6V20.5Z" fill="#f0c850" stroke="#b8862a"/><path d="M8.8 20.5L12 11.4H24.6L21 20.5Z" fill="#fff0a8" stroke="#c4922a" stroke-width=".9"/></svg></div><span class="abs nw" style="left:276px;top:13px;">Папки</span><i class="sep" style="left:319px;top:2px;height:35px"></i><div class="abs" style="left:325px;top:9px;"><svg width="24" height="20" viewBox="0 0 24 20" ><rect x=".8" y=".8" width="22.4" height="18.4" rx="1.5" fill="#fff" stroke="#2a5fc2" stroke-width="1.4"/><rect x="1.5" y="1.5" width="21" height="3" fill="#3c78d8"/><rect x="4.5" y="6.5" width="3" height="3" fill="#9a8ad8"/><rect x="10.5" y="6.5" width="3" height="3" fill="#3a6ad0"/><rect x="16.5" y="6.5" width="3" height="3" fill="#2a9a4a"/><rect x="4.5" y="11" width="3" height="3" fill="#e8623a"/><rect x="10.5" y="11" width="3" height="3" fill="#1a3a9a"/><rect x="16.5" y="11" width="3" height="3" fill="#d09a1a"/><path d="M4.5 15.8H7.5M10.5 15.8H13.5M16.5 15.8H19.5" stroke="#999" stroke-width="1"/></svg></div><i class="dd" style="left:352px;top:18px"></i></div><div class="addr" style="left:0;top:64px;width:536px;height:22px"><span class="abs nw gray3" style="left:6px;top:5px;">Адрес:</span><div class="inp" style="left:45px;top:0;width:410px;height:22px"><div class="abs" style="left:2px;top:1px;"><svg width="16" height="16" viewBox="0 0 16 16" ><linearGradient id="bg37" x1="0" y1="0" x2="1" y2="0"><stop offset="0" stop-color="#d4e8fa"/><stop offset=".45" stop-color="#ffffff"/><stop offset="1" stop-color="#c4dcf4"/></linearGradient><path d="M3 4.4L4.4 2.6L5.8 2.9L7 1.1H10.2V4.6Z" fill="#ffe6a0"/><path d="M.2 3.9Q6.6 5.2 13.2 3.1L11.7 13.4Q7 15.8 2.6 14.2Z" fill="url(#bg37)" stroke="#b8d0ee" stroke-width=".6"/><path d="M3.4 7.4L5.8 7L6 12.4L4.4 12.8Z" fill="#c4b4e6" opacity=".7"/><path d="M6.2 7.8L11 6.1L11.3 9.6L9.7 12.4L6.2 13Z" fill="#149c26"/><path d="M7.4 9.2L8.6 8.8M9.2 10.6L10.2 10.2" stroke="#f0fff0" stroke-width="1.1"/><path d="M13.6 3.6L12.2 13.6Q8 16 3.4 14.8" fill="none" stroke="#203080" stroke-width=".7" opacity=".45"/></svg></div><span class="abs nw" style="left:21px;top:5px;">Корзина</span><div class="combo" style="right:1px;top:1px"><svg width="15" height="18" viewBox="0 0 15 18"><path d="M4 7L7.5 10.5L11 7" fill="none" stroke="#4d6185" stroke-width="2"/></svg></div></div><div class="abs" style="left:461px;top:2px;"><svg width="19" height="19" viewBox="0 0 19 19" ><linearGradient id="go38" x1="0" y1="0" x2="1" y2="1"><stop offset="0" stop-color="#5fd06a"/><stop offset="1" stop-color="#1f8a30"/></linearGradient><rect x=".7" y=".7" width="17.6" height="17.6" rx="1.6" fill="url(#go38)" stroke="#2a8a36" stroke-width="1"/><path d="M4 9.5H13.5M9.6 5L14.2 9.5L9.6 14" fill="none" stroke="#fff" stroke-width="2.2"/></svg></div><span class="abs nw" style="left:483px;top:5px;">Переход</span></div><div class="pane" style="left:0;top:86px;width:241px;height:358px"><div class="box" style="left:12px;top:12px;width:213px;height:82px"><div class="hd"><b style="letter-spacing:0.13px">Задачи для "Корзины"</b></div><div class="chev" style="left:191px;top:3.5px"><svg width="15" height="15" viewBox="0 0 15 15"><path d="M4.6 7L7.5 4.2L10.4 7M4.6 10.6L7.5 7.8L10.4 10.6" fill="none" stroke="#1c3f9e" stroke-width="1.5"/></svg></div><div class="bd"><div class="abs" style="left:12px;top:9px;"><svg width="16" height="16" viewBox="0 0 16 16" ><linearGradient id="eb39" x1="0" y1="0" x2="1" y2="1"><stop offset="0" stop-color="#d8eeff"/><stop offset=".45" stop-color="#9fd0f8"/><stop offset="1" stop-color="#ffffff"/></linearGradient><path d="M.6 3.6Q7 2.6 13.6 .8L13.2 10.6Q9 14.6 3 14.8Z" fill="url(#eb39)" stroke="#9cc4e8" stroke-width=".7"/><path d="M2.4 12.6Q7 12.8 12.8 9.6" fill="none" stroke="#fff" stroke-width="1.4"/><path d="M6.6 6.4L10.8 4.4L11.6 9.4L7.2 12Z" fill="#22a82e"/><path d="M8 7.4L9.8 6.6M8.4 10L10.4 8.8" stroke="#e8ffe8" stroke-width="1"/><path d="M14 1.4L13.6 10.8Q9.4 15 3.4 15.2" fill="none" stroke="#667" stroke-width=".6" opacity=".5"/></svg></div><span class="lk" style="left:34px;top:11px;letter-spacing:-0.1px">Очистить корзину</span><div class="abs" style="left:12px;top:29px;"><svg width="16" height="17" viewBox="0 0 16 17" ><linearGradient id="rs40" x1="0" y1="0" x2="1" y2="1"><stop offset="0" stop-color="#1fae1a"/><stop offset=".6" stop-color="#5fe04a"/><stop offset="1" stop-color="#2fb52a"/></linearGradient><path d="M2 1.3H12.7L10.6 6Q13.6 10 9 15.8Q8.6 12 6.8 10.2L5.5 8.8L2 11.8Z" fill="url(#rs40)" stroke="#1a8a1a" stroke-width=".6" stroke-linejoin="round"/><path d="M13.2 2.4L11.4 6Q14.2 10 9.8 16" fill="none" stroke="#4a5a4a" stroke-width=".7" opacity=".5"/></svg></div><span class="lk" style="left:34px;top:31px;letter-spacing:-0.1px">Восстановить все объекты</span></div></div><div class="box" style="left:12px;top:109px;width:213px;height:122px"><div class="hd"><b style="letter-spacing:0.21px">Другие места</b></div><div class="chev" style="left:191px;top:3.5px"><svg width="15" height="15" viewBox="0 0 15 15"><path d="M4.6 7L7.5 4.2L10.4 7M4.6 10.6L7.5 7.8L10.4 10.6" fill="none" stroke="#1c3f9e" stroke-width="1.5"/></svg></div><div class="bd"><div class="abs" style="left:12px;top:9px;"><svg width="17" height="17" viewBox="0 0 17 17" ><linearGradient id="dk41" x1="0" y1="0" x2="1" y2="1"><stop offset="0" stop-color="#3a90f0"/><stop offset="1" stop-color="#1a5ac8"/></linearGradient><path d="M.4 2.8Q.4 2 1.4 1.9L12.4 .6Q13.3 .6 13.3 1.5V12.6Q13.3 13.4 12.4 13.6L1.4 15.4Q.4 15.5 .4 14.6Z" fill="url(#dk41)"/><path d="M9.8 3.2Q4 2.2 2.6 7.4Q2.2 12.4 7 13Q10.6 13 11.8 10.4Q8.6 12 6.4 10.2Q4.6 7 7.4 4.6Q8.6 3.6 9.8 3.2Z" fill="#fff3c4"/><path d="M6.6 6L10.6 4.4L11.4 9L7.6 10.2Z" fill="#dcecff"/><path d="M7.6 8.6L9.4 7.4L9.6 9L8 9.4Z" fill="#222"/><path d="M14.3 3.6L15 5.4L16.8 6.1L15 6.8L14.3 8.6L13.6 6.8L11.8 6.1L13.6 5.4Z" fill="#f0521a"/><circle cx="14.3" cy="6.1" r=".8" fill="#ffc040"/></svg></div><span class="lk" style="left:34px;top:11px;letter-spacing:-0.1px">Рабочий стол</span><div class="abs" style="left:12px;top:31px;"><svg width="16" height="16" viewBox="0 0 16 16" ><path d="M.6 13.6V3.4Q.6 2.4 1.8 2.4H4.4V13.6Z" fill="#f2c648" stroke="#c48e1c" stroke-width="1"/><rect x="4.4" y=".4" width="9.4" height="8.4" fill="#fff" stroke="#9fb2d6" stroke-width=".7"/><path d="M11.2 .4L13.8 3H11.2Z" fill="#4aa0f0"/><path d="M5.8 2.3H10M5.8 4.3H12" stroke="#78a8e8" stroke-width="1"/><path d="M.7 13.7V7H3.2V6.8H15V13.7Z" fill="#f2c648" stroke="#c48e1c" stroke-width="1"/><rect x="3.3" y="7.1" width="11.2" height="5.4" fill="#e6edf4"/><path d="M3.3 7.3H14.5" stroke="#fff" stroke-width=".8"/><path d="M5 8.9H11" stroke="#78a8e8" stroke-width="1"/><path d="M.4 14.3H15.4" stroke="#a87810" stroke-width="1"/></svg></div><span class="lk" style="left:34px;top:31px;letter-spacing:-0.15px">Мои документы</span><div class="abs" style="left:12px;top:50px;"><svg width="16" height="17" viewBox="0 0 16 17" ><linearGradient id="cs43" x1="0" y1="0" x2="1" y2="1"><stop offset="0" stop-color="#58b8ff"/><stop offset=".5" stop-color="#a4e2ff"/><stop offset="1" stop-color="#4aa8f8"/></linearGradient><ellipse cx="8.8" cy="13.6" rx="5.4" ry="2.8" fill="#6a5aa8" opacity=".75"/><ellipse cx="8.4" cy="13" rx="5.2" ry="2.6" fill="#eeeef8"/><path d="M7 10.4L11.6 9L12.2 12.4L8 13Z" fill="#8a80c0"/><path d="M2.8 1.6L13.1 .2L14.1 8.3L5.3 11.1Z" fill="#b4acd8"/><path d="M3.9 2.4L12.4 1.2L13.1 7.7L5.9 9.9Z" fill="url(#cs43)"/></svg></div><span class="lk" style="left:34px;top:51px;letter-spacing:-0.17px">Мой компьютер</span><div class="abs" style="left:12px;top:69px;"><svg width="17" height="17" viewBox="0 0 17 17" ><linearGradient id="ns44" x1="0" y1="0" x2="1" y2="1"><stop offset="0" stop-color="#58b8ff"/><stop offset=".5" stop-color="#a4e2ff"/><stop offset="1" stop-color="#4aa8f8"/></linearGradient><circle cx="3.9" cy="5.6" r="4.2" fill="#1868d8"/><path d="M1.4 3Q3.4 .8 6.2 1.8Q7.6 4 6.4 6.4Q5 8.6 3.6 6.8Q2 5.6 1.4 3Z" fill="#2cb82c"/><ellipse cx="11" cy="14.3" rx="5.1" ry="2.6" fill="#6a5aa8" opacity=".75"/><ellipse cx="10.7" cy="13.8" rx="4.9" ry="2.4" fill="#eeeef8"/><path d="M9.4 11L13.6 9.6L14.2 12.8L10.4 13.6Z" fill="#8a80c0"/><path d="M5.9 2.9L14.6 1.4L15.8 8.7L7.6 11.1Z" fill="#b4acd8"/><path d="M6.9 3.7L13.9 2.4L14.8 8.1L8.2 10Z" fill="url(#ns44)"/></svg></div><span class="lk" style="left:34px;top:71px;letter-spacing:-0.13px">Сетевое окружение</span></div></div><div class="box" style="left:12px;top:246px;width:213px;height:72px"><div class="hd"><b style="letter-spacing:0.12px">Подробно</b></div><div class="chev" style="left:191px;top:3.5px"><svg width="15" height="15" viewBox="0 0 15 15"><path d="M4.6 7L7.5 4.2L10.4 7M4.6 10.6L7.5 7.8L10.4 10.6" fill="none" stroke="#1c3f9e" stroke-width="1.5"/></svg></div><div class="bd"><span class="lk" style="left:12px;top:11px;color:#000;font-weight:bold;letter-spacing:.28px">Корзина</span><span class="lk" style="left:12px;top:24px;color:#000;letter-spacing:-.25px">Системная папка</span></div></div></div><div class="abs" style="left:241px;top:86px;width:295px;height:342px;overflow:hidden"><div class="abs" style="left:0;top:0"><div class="abs" style="left:-1px;top:0px;"><svg width="18" height="17" viewBox="0 0 18 17" ><linearGradient id="wg45" x1="0" y1="0" x2="1" y2="1"><stop offset="0" stop-color="#ffffff"/><stop offset=".55" stop-color="#dce8fb"/><stop offset="1" stop-color="#8fb4ee"/></linearGradient><path d="M4.8 .8H13.2L16.3 3.9V15.2H4.8Z" fill="url(#wg45)" stroke="#6f8fc4" stroke-width=".9"/><path d="M16.4 4V15.3H4.8" fill="none" stroke="#34507c" stroke-width="1"/><path d="M13.2 .8V3.9H16.3" fill="#f4f8ff" stroke="#4d6a9a" stroke-width=".7"/><path d="M7.5 12H14M7.5 13.6H12.6" stroke="#7d9fd8" stroke-width=".8"/><path d="M11.8 4.4H13.6V9.6H11.8" fill="none" stroke="#9db8e4" stroke-width=".7"/><rect x="1.75" y="1.75" width="8.7" height="8.4" fill="#fff" stroke="#1d47b0" stroke-width="1.1"/><path d="M3.2 3.2L4.5 8.7L6.1 4.6L7.5 8.7L9.2 3.2" fill="none" stroke="#14309a" stroke-width="1.8" stroke-linejoin="miter"/></svg></div><span class="abs nw fl" style="left:18px;top:3px;">1 курс</span><div class="abs" style="left:0px;top:18px;"><svg width="16" height="17" viewBox="0 0 16 17" ><linearGradient id="tg46" x1="0" y1="0" x2="1" y2="1"><stop offset="0" stop-color="#ffffff"/><stop offset="1" stop-color="#dcdcdc"/></linearGradient><path d="M3 2.6H13V14.4Q10 16 3 15.4Z" fill="url(#tg46)" stroke="#8e8e8e" stroke-width=".9"/><path d="M3.4 2.3H12.8" stroke="#b58a2a" stroke-width="1.7" stroke-dasharray="1.2 .9"/><path d="M5.4 6.5H10.6M5.4 9H10.6M5.4 11.5H9" stroke="#666" stroke-width="1" shape-rendering="crispEdges"/></svg></div><span class="abs nw fl" style="left:18px;top:20px;letter-spacing:-.36px">Dalai-lama XIV - Buddizm Tibeta</span><div class="abs" style="left:-1px;top:34px;"><svg width="18" height="17" viewBox="0 0 18 17" ><linearGradient id="wg47" x1="0" y1="0" x2="1" y2="1"><stop offset="0" stop-color="#ffffff"/><stop offset=".55" stop-color="#dce8fb"/><stop offset="1" stop-color="#8fb4ee"/></linearGradient><path d="M4.8 .8H13.2L16.3 3.9V15.2H4.8Z" fill="url(#wg47)" stroke="#6f8fc4" stroke-width=".9"/><path d="M16.4 4V15.3H4.8" fill="none" stroke="#34507c" stroke-width="1"/><path d="M13.2 .8V3.9H16.3" fill="#f4f8ff" stroke="#4d6a9a" stroke-width=".7"/><path d="M7.5 12H14M7.5 13.6H12.6" stroke="#7d9fd8" stroke-width=".8"/><path d="M11.8 4.4H13.6V9.6H11.8" fill="none" stroke="#9db8e4" stroke-width=".7"/><rect x="1.75" y="1.75" width="8.7" height="8.4" fill="#fff" stroke="#1d47b0" stroke-width="1.1"/><path d="M3.2 3.2L4.5 8.7L6.1 4.6L7.5 8.7L9.2 3.2" fill="none" stroke="#14309a" stroke-width="1.8" stroke-linejoin="miter"/></svg></div><span class="abs nw fl" style="left:18px;top:37px;letter-spacing:0">№4 НЕВРОЛОГИ</span><div class="abs" style="left:-1px;top:51px;"><svg width="18" height="17" viewBox="0 0 18 17" ><linearGradient id="wg48" x1="0" y1="0" x2="1" y2="1"><stop offset="0" stop-color="#ffffff"/><stop offset=".55" stop-color="#dce8fb"/><stop offset="1" stop-color="#8fb4ee"/></linearGradient><path d="M4.8 .8H13.2L16.3 3.9V15.2H4.8Z" fill="url(#wg48)" stroke="#6f8fc4" stroke-width=".9"/><path d="M16.4 4V15.3H4.8" fill="none" stroke="#34507c" stroke-width="1"/><path d="M13.2 .8V3.9H16.3" fill="#f4f8ff" stroke="#4d6a9a" stroke-width=".7"/><path d="M7.5 12H14M7.5 13.6H12.6" stroke="#7d9fd8" stroke-width=".8"/><path d="M11.8 4.4H13.6V9.6H11.8" fill="none" stroke="#9db8e4" stroke-width=".7"/><rect x="1.75" y="1.75" width="8.7" height="8.4" fill="#fff" stroke="#1d47b0" stroke-width="1.1"/><path d="M3.2 3.2L4.5 8.7L6.1 4.6L7.5 8.7L9.2 3.2" fill="none" stroke="#14309a" stroke-width="1.8" stroke-linejoin="miter"/></svg></div><span class="abs nw fl" style="left:18px;top:54px;">robski_oks03</span><div class="abs" style="left:-1px;top:68px;"><svg width="18" height="17" viewBox="0 0 18 17" ><path d="M1 .4L5.2 3.8V15L1 11.2Z" fill="#fff"/><path d="M1 .6L5.2 4M1 4L5.2 7.6M1 7.4L5.2 11.2M1 10.8L5.2 15" stroke="#111" stroke-width="1"/><path d="M1 .2H13.5L16.8 3.4H5.2Z" fill="#94104a"/><path d="M4 1.2L7.4 1L8 2.4L5 2.6Z" fill="#d8d010"/><path d="M5.2 3.5H16.9V7H5.2Z" fill="#b01470"/><path d="M5.2 4.3H16.4" stroke="#ff78cc" stroke-width="1"/><path d="M5.2 6.4H16.9" stroke="#700838" stroke-width="1"/><path d="M4.8 7.4H16.4" stroke="#000" stroke-width=".9"/><path d="M5.2 7.9H16.9V10.9H5.2Z" fill="#1670d0"/><path d="M5.2 8.4H16.4" stroke="#58b8ff" stroke-width="1"/><path d="M5.2 10.5H16.9" stroke="#083080" stroke-width=".9"/><path d="M4.8 11.3H16.4" stroke="#000" stroke-width=".9"/><path d="M5.2 11.8H16.9V14.9H5.2Z" fill="#14a868"/><path d="M5.2 12.3H16.4" stroke="#48f0a8" stroke-width="1"/><path d="M5.2 14.4H16.9" stroke="#085028" stroke-width=".9"/><path d="M4.4 15.4H16.2" stroke="#000" stroke-width="1"/><path d="M6.4 4V6.8M6.4 8V10.8M6.4 12V14.8" stroke="#e8d020" stroke-width="1"/></svg></div><span class="abs nw fl" style="left:18px;top:71px;">robski_oks03</span><div class="abs" style="left:-1px;top:85px;"><svg width="18" height="17" viewBox="0 0 18 17" ><linearGradient id="wg50" x1="0" y1="0" x2="1" y2="1"><stop offset="0" stop-color="#ffffff"/><stop offset=".55" stop-color="#dce8fb"/><stop offset="1" stop-color="#8fb4ee"/></linearGradient><path d="M4.8 .8H13.2L16.3 3.9V15.2H4.8Z" fill="url(#wg50)" stroke="#6f8fc4" stroke-width=".9"/><path d="M16.4 4V15.3H4.8" fill="none" stroke="#34507c" stroke-width="1"/><path d="M13.2 .8V3.9H16.3" fill="#f4f8ff" stroke="#4d6a9a" stroke-width=".7"/><path d="M7.5 12H14M7.5 13.6H12.6" stroke="#7d9fd8" stroke-width=".8"/><path d="M11.8 4.4H13.6V9.6H11.8" fill="none" stroke="#9db8e4" stroke-width=".7"/><rect x="1.75" y="1.75" width="8.7" height="8.4" fill="#fff" stroke="#1d47b0" stroke-width="1.1"/><path d="M3.2 3.2L4.5 8.7L6.1 4.6L7.5 8.7L9.2 3.2" fill="none" stroke="#14309a" stroke-width="1.8" stroke-linejoin="miter"/></svg></div><span class="abs nw fl" style="left:18px;top:88px;">SSCP</span><div class="abs" style="left:-1px;top:102px;"><svg width="18" height="17" viewBox="0 0 18 17" ><linearGradient id="wg51" x1="0" y1="0" x2="1" y2="1"><stop offset="0" stop-color="#ffffff"/><stop offset=".55" stop-color="#dce8fb"/><stop offset="1" stop-color="#8fb4ee"/></linearGradient><path d="M4.8 .8H13.2L16.3 3.9V15.2H4.8Z" fill="url(#wg51)" stroke="#6f8fc4" stroke-width=".9"/><path d="M16.4 4V15.3H4.8" fill="none" stroke="#34507c" stroke-width="1"/><path d="M13.2 .8V3.9H16.3" fill="#f4f8ff" stroke="#4d6a9a" stroke-width=".7"/><path d="M7.5 12H14M7.5 13.6H12.6" stroke="#7d9fd8" stroke-width=".8"/><path d="M11.8 4.4H13.6V9.6H11.8" fill="none" stroke="#9db8e4" stroke-width=".7"/><rect x="1.75" y="1.75" width="8.7" height="8.4" fill="#fff" stroke="#1d47b0" stroke-width="1.1"/><path d="M3.2 3.2L4.5 8.7L6.1 4.6L7.5 8.7L9.2 3.2" fill="none" stroke="#14309a" stroke-width="1.8" stroke-linejoin="miter"/></svg></div><span class="abs nw fl" style="left:18px;top:105px;">Ак-гинекологи 4</span><div class="abs" style="left:-1px;top:119px;"><svg width="18" height="17" viewBox="0 0 18 17" ><linearGradient id="wg52" x1="0" y1="0" x2="1" y2="1"><stop offset="0" stop-color="#ffffff"/><stop offset=".55" stop-color="#dce8fb"/><stop offset="1" stop-color="#8fb4ee"/></linearGradient><path d="M4.8 .8H13.2L16.3 3.9V15.2H4.8Z" fill="url(#wg52)" stroke="#6f8fc4" stroke-width=".9"/><path d="M16.4 4V15.3H4.8" fill="none" stroke="#34507c" stroke-width="1"/><path d="M13.2 .8V3.9H16.3" fill="#f4f8ff" stroke="#4d6a9a" stroke-width=".7"/><path d="M7.5 12H14M7.5 13.6H12.6" stroke="#7d9fd8" stroke-width=".8"/><path d="M11.8 4.4H13.6V9.6H11.8" fill="none" stroke="#9db8e4" stroke-width=".7"/><rect x="1.75" y="1.75" width="8.7" height="8.4" fill="#fff" stroke="#1d47b0" stroke-width="1.1"/><path d="M3.2 3.2L4.5 8.7L6.1 4.6L7.5 8.7L9.2 3.2" fill="none" stroke="#14309a" stroke-width="1.8" stroke-linejoin="miter"/></svg></div><span class="abs nw fl" style="left:18px;top:122px;">Антиб пнев</span><div class="abs" style="left:0px;top:136px;"><svg width="17" height="17" viewBox="0 0 17 17" ><linearGradient id="jg53" x1="0" y1="0" x2="1" y2="1"><stop offset="0" stop-color="#ffffff"/><stop offset=".5" stop-color="#eef4ff"/><stop offset="1" stop-color="#9cbcf0"/></linearGradient><linearGradient id="jp53" x1="0" y1="0" x2="0" y2="1"><stop offset="0" stop-color="#f8a030"/><stop offset=".24" stop-color="#f07828"/><stop offset=".32" stop-color="#d43c1c"/><stop offset=".44" stop-color="#f08030"/><stop offset=".72" stop-color="#f4a860"/><stop offset="1" stop-color="#c89cc0"/></linearGradient><path d="M2.5 .9H10.8L14.6 4.4V15.2H2.5Z" fill="url(#jg53)" stroke="#6c92d8" stroke-width=".9"/><path d="M14.7 4.6V15.3H2.8" fill="none" stroke="#44546e" stroke-width="1" opacity=".85"/><path d="M10.6 1.4L13.8 4.2H10.6Z" fill="#2a90f0"/><rect x="4.2" y="4.2" width="8" height="8" fill="url(#jp53)"/><rect x="8.2" y="9" width="3.4" height="3" fill="#ffe468" opacity=".9"/><rect x="4.4" y="10.2" width="3.2" height="1.9" fill="#6c5cc4" opacity=".85"/><rect x="5.7" y="5.6" width="1.4" height="5" fill="#3a2030" opacity=".75"/><path d="M3 15.9H15" stroke="#8a96b8" stroke-width=".7" opacity=".5"/></svg></div><span class="abs nw fl" style="left:18px;top:139px;letter-spacing:-.18px">Астана, Павлодар 001</span><div class="abs" style="left:0px;top:153px;"><svg width="17" height="17" viewBox="0 0 17 17" ><linearGradient id="jg54" x1="0" y1="0" x2="1" y2="1"><stop offset="0" stop-color="#ffffff"/><stop offset=".5" stop-color="#eef4ff"/><stop offset="1" stop-color="#9cbcf0"/></linearGradient><linearGradient id="jp54" x1="0" y1="0" x2="0" y2="1"><stop offset="0" stop-color="#f8a030"/><stop offset=".24" stop-color="#f07828"/><stop offset=".32" stop-color="#d43c1c"/><stop offset=".44" stop-color="#f08030"/><stop offset=".72" stop-color="#f4a860"/><stop offset="1" stop-color="#c89cc0"/></linearGradient><path d="M2.5 .9H10.8L14.6 4.4V15.2H2.5Z" fill="url(#jg54)" stroke="#6c92d8" stroke-width=".9"/><path d="M14.7 4.6V15.3H2.8" fill="none" stroke="#44546e" stroke-width="1" opacity=".85"/><path d="M10.6 1.4L13.8 4.2H10.6Z" fill="#2a90f0"/><rect x="4.2" y="4.2" width="8" height="8" fill="url(#jp54)"/><rect x="8.2" y="9" width="3.4" height="3" fill="#ffe468" opacity=".9"/><rect x="4.4" y="10.2" width="3.2" height="1.9" fill="#6c5cc4" opacity=".85"/><rect x="5.7" y="5.6" width="1.4" height="5" fill="#3a2030" opacity=".75"/><path d="M3 15.9H15" stroke="#8a96b8" stroke-width=".7" opacity=".5"/></svg></div><span class="abs nw fl" style="left:18px;top:156px;letter-spacing:-.18px">Астана, Павлодар 006</span><div class="abs" style="left:0px;top:170px;"><svg width="17" height="17" viewBox="0 0 17 17" ><linearGradient id="jg55" x1="0" y1="0" x2="1" y2="1"><stop offset="0" stop-color="#ffffff"/><stop offset=".5" stop-color="#eef4ff"/><stop offset="1" stop-color="#9cbcf0"/></linearGradient><linearGradient id="jp55" x1="0" y1="0" x2="0" y2="1"><stop offset="0" stop-color="#f8a030"/><stop offset=".24" stop-color="#f07828"/><stop offset=".32" stop-color="#d43c1c"/><stop offset=".44" stop-color="#f08030"/><stop offset=".72" stop-color="#f4a860"/><stop offset="1" stop-color="#c89cc0"/></linearGradient><path d="M2.5 .9H10.8L14.6 4.4V15.2H2.5Z" fill="url(#jg55)" stroke="#6c92d8" stroke-width=".9"/><path d="M14.7 4.6V15.3H2.8" fill="none" stroke="#44546e" stroke-width="1" opacity=".85"/><path d="M10.6 1.4L13.8 4.2H10.6Z" fill="#2a90f0"/><rect x="4.2" y="4.2" width="8" height="8" fill="url(#jp55)"/><rect x="8.2" y="9" width="3.4" height="3" fill="#ffe468" opacity=".9"/><rect x="4.4" y="10.2" width="3.2" height="1.9" fill="#6c5cc4" opacity=".85"/><rect x="5.7" y="5.6" width="1.4" height="5" fill="#3a2030" opacity=".75"/><path d="M3 15.9H15" stroke="#8a96b8" stroke-width=".7" opacity=".5"/></svg></div><span class="abs nw fl" style="left:18px;top:173px;letter-spacing:-.18px">Астана, Павлодар 007</span><div class="abs" style="left:0px;top:187px;"><svg width="17" height="17" viewBox="0 0 17 17" ><linearGradient id="jg56" x1="0" y1="0" x2="1" y2="1"><stop offset="0" stop-color="#ffffff"/><stop offset=".5" stop-color="#eef4ff"/><stop offset="1" stop-color="#9cbcf0"/></linearGradient><linearGradient id="jp56" x1="0" y1="0" x2="0" y2="1"><stop offset="0" stop-color="#f8a030"/><stop offset=".24" stop-color="#f07828"/><stop offset=".32" stop-color="#d43c1c"/><stop offset=".44" stop-color="#f08030"/><stop offset=".72" stop-color="#f4a860"/><stop offset="1" stop-color="#c89cc0"/></linearGradient><path d="M2.5 .9H10.8L14.6 4.4V15.2H2.5Z" fill="url(#jg56)" stroke="#6c92d8" stroke-width=".9"/><path d="M14.7 4.6V15.3H2.8" fill="none" stroke="#44546e" stroke-width="1" opacity=".85"/><path d="M10.6 1.4L13.8 4.2H10.6Z" fill="#2a90f0"/><rect x="4.2" y="4.2" width="8" height="8" fill="url(#jp56)"/><rect x="8.2" y="9" width="3.4" height="3" fill="#ffe468" opacity=".9"/><rect x="4.4" y="10.2" width="3.2" height="1.9" fill="#6c5cc4" opacity=".85"/><rect x="5.7" y="5.6" width="1.4" height="5" fill="#3a2030" opacity=".75"/><path d="M3 15.9H15" stroke="#8a96b8" stroke-width=".7" opacity=".5"/></svg></div><span class="abs nw fl" style="left:18px;top:190px;letter-spacing:-.18px">Астана, Павлодар 008</span><div class="abs" style="left:0px;top:204px;"><svg width="17" height="17" viewBox="0 0 17 17" ><linearGradient id="jg57" x1="0" y1="0" x2="1" y2="1"><stop offset="0" stop-color="#ffffff"/><stop offset=".5" stop-color="#eef4ff"/><stop offset="1" stop-color="#9cbcf0"/></linearGradient><linearGradient id="jp57" x1="0" y1="0" x2="0" y2="1"><stop offset="0" stop-color="#f8a030"/><stop offset=".24" stop-color="#f07828"/><stop offset=".32" stop-color="#d43c1c"/><stop offset=".44" stop-color="#f08030"/><stop offset=".72" stop-color="#f4a860"/><stop offset="1" stop-color="#c89cc0"/></linearGradient><path d="M2.5 .9H10.8L14.6 4.4V15.2H2.5Z" fill="url(#jg57)" stroke="#6c92d8" stroke-width=".9"/><path d="M14.7 4.6V15.3H2.8" fill="none" stroke="#44546e" stroke-width="1" opacity=".85"/><path d="M10.6 1.4L13.8 4.2H10.6Z" fill="#2a90f0"/><rect x="4.2" y="4.2" width="8" height="8" fill="url(#jp57)"/><rect x="8.2" y="9" width="3.4" height="3" fill="#ffe468" opacity=".9"/><rect x="4.4" y="10.2" width="3.2" height="1.9" fill="#6c5cc4" opacity=".85"/><rect x="5.7" y="5.6" width="1.4" height="5" fill="#3a2030" opacity=".75"/><path d="M3 15.9H15" stroke="#8a96b8" stroke-width=".7" opacity=".5"/></svg></div><span class="abs nw fl" style="left:18px;top:207px;letter-spacing:-.18px">Астана, Павлодар 009</span><div class="abs" style="left:0px;top:221px;"><svg width="17" height="17" viewBox="0 0 17 17" ><linearGradient id="jg58" x1="0" y1="0" x2="1" y2="1"><stop offset="0" stop-color="#ffffff"/><stop offset=".5" stop-color="#eef4ff"/><stop offset="1" stop-color="#9cbcf0"/></linearGradient><linearGradient id="jp58" x1="0" y1="0" x2="0" y2="1"><stop offset="0" stop-color="#f8a030"/><stop offset=".24" stop-color="#f07828"/><stop offset=".32" stop-color="#d43c1c"/><stop offset=".44" stop-color="#f08030"/><stop offset=".72" stop-color="#f4a860"/><stop offset="1" stop-color="#c89cc0"/></linearGradient><path d="M2.5 .9H10.8L14.6 4.4V15.2H2.5Z" fill="url(#jg58)" stroke="#6c92d8" stroke-width=".9"/><path d="M14.7 4.6V15.3H2.8" fill="none" stroke="#44546e" stroke-width="1" opacity=".85"/><path d="M10.6 1.4L13.8 4.2H10.6Z" fill="#2a90f0"/><rect x="4.2" y="4.2" width="8" height="8" fill="url(#jp58)"/><rect x="8.2" y="9" width="3.4" height="3" fill="#ffe468" opacity=".9"/><rect x="4.4" y="10.2" width="3.2" height="1.9" fill="#6c5cc4" opacity=".85"/><rect x="5.7" y="5.6" width="1.4" height="5" fill="#3a2030" opacity=".75"/><path d="M3 15.9H15" stroke="#8a96b8" stroke-width=".7" opacity=".5"/></svg></div><span class="abs nw fl" style="left:18px;top:224px;letter-spacing:-.18px">Астана, Павлодар 010</span><div class="abs" style="left:0px;top:238px;"><svg width="17" height="17" viewBox="0 0 17 17" ><linearGradient id="jg59" x1="0" y1="0" x2="1" y2="1"><stop offset="0" stop-color="#ffffff"/><stop offset=".5" stop-color="#eef4ff"/><stop offset="1" stop-color="#9cbcf0"/></linearGradient><linearGradient id="jp59" x1="0" y1="0" x2="0" y2="1"><stop offset="0" stop-color="#f8a030"/><stop offset=".24" stop-color="#f07828"/><stop offset=".32" stop-color="#d43c1c"/><stop offset=".44" stop-color="#f08030"/><stop offset=".72" stop-color="#f4a860"/><stop offset="1" stop-color="#c89cc0"/></linearGradient><path d="M2.5 .9H10.8L14.6 4.4V15.2H2.5Z" fill="url(#jg59)" stroke="#6c92d8" stroke-width=".9"/><path d="M14.7 4.6V15.3H2.8" fill="none" stroke="#44546e" stroke-width="1" opacity=".85"/><path d="M10.6 1.4L13.8 4.2H10.6Z" fill="#2a90f0"/><rect x="4.2" y="4.2" width="8" height="8" fill="url(#jp59)"/><rect x="8.2" y="9" width="3.4" height="3" fill="#ffe468" opacity=".9"/><rect x="4.4" y="10.2" width="3.2" height="1.9" fill="#6c5cc4" opacity=".85"/><rect x="5.7" y="5.6" width="1.4" height="5" fill="#3a2030" opacity=".75"/><path d="M3 15.9H15" stroke="#8a96b8" stroke-width=".7" opacity=".5"/></svg></div><span class="abs nw fl" style="left:18px;top:241px;letter-spacing:-.18px">Астана, Павлодар 011</span><div class="abs" style="left:0px;top:255px;"><svg width="17" height="17" viewBox="0 0 17 17" ><linearGradient id="jg60" x1="0" y1="0" x2="1" y2="1"><stop offset="0" stop-color="#ffffff"/><stop offset=".5" stop-color="#eef4ff"/><stop offset="1" stop-color="#9cbcf0"/></linearGradient><linearGradient id="jp60" x1="0" y1="0" x2="0" y2="1"><stop offset="0" stop-color="#f8a030"/><stop offset=".24" stop-color="#f07828"/><stop offset=".32" stop-color="#d43c1c"/><stop offset=".44" stop-color="#f08030"/><stop offset=".72" stop-color="#f4a860"/><stop offset="1" stop-color="#c89cc0"/></linearGradient><path d="M2.5 .9H10.8L14.6 4.4V15.2H2.5Z" fill="url(#jg60)" stroke="#6c92d8" stroke-width=".9"/><path d="M14.7 4.6V15.3H2.8" fill="none" stroke="#44546e" stroke-width="1" opacity=".85"/><path d="M10.6 1.4L13.8 4.2H10.6Z" fill="#2a90f0"/><rect x="4.2" y="4.2" width="8" height="8" fill="url(#jp60)"/><rect x="8.2" y="9" width="3.4" height="3" fill="#ffe468" opacity=".9"/><rect x="4.4" y="10.2" width="3.2" height="1.9" fill="#6c5cc4" opacity=".85"/><rect x="5.7" y="5.6" width="1.4" height="5" fill="#3a2030" opacity=".75"/><path d="M3 15.9H15" stroke="#8a96b8" stroke-width=".7" opacity=".5"/></svg></div><span class="abs nw fl" style="left:18px;top:258px;letter-spacing:-.18px">Астана, Павлодар 012</span><div class="abs" style="left:0px;top:272px;"><svg width="17" height="17" viewBox="0 0 17 17" ><linearGradient id="jg61" x1="0" y1="0" x2="1" y2="1"><stop offset="0" stop-color="#ffffff"/><stop offset=".5" stop-color="#eef4ff"/><stop offset="1" stop-color="#9cbcf0"/></linearGradient><linearGradient id="jp61" x1="0" y1="0" x2="0" y2="1"><stop offset="0" stop-color="#f8a030"/><stop offset=".24" stop-color="#f07828"/><stop offset=".32" stop-color="#d43c1c"/><stop offset=".44" stop-color="#f08030"/><stop offset=".72" stop-color="#f4a860"/><stop offset="1" stop-color="#c89cc0"/></linearGradient><path d="M2.5 .9H10.8L14.6 4.4V15.2H2.5Z" fill="url(#jg61)" stroke="#6c92d8" stroke-width=".9"/><path d="M14.7 4.6V15.3H2.8" fill="none" stroke="#44546e" stroke-width="1" opacity=".85"/><path d="M10.6 1.4L13.8 4.2H10.6Z" fill="#2a90f0"/><rect x="4.2" y="4.2" width="8" height="8" fill="url(#jp61)"/><rect x="8.2" y="9" width="3.4" height="3" fill="#ffe468" opacity=".9"/><rect x="4.4" y="10.2" width="3.2" height="1.9" fill="#6c5cc4" opacity=".85"/><rect x="5.7" y="5.6" width="1.4" height="5" fill="#3a2030" opacity=".75"/><path d="M3 15.9H15" stroke="#8a96b8" stroke-width=".7" opacity=".5"/></svg></div><span class="abs nw fl" style="left:18px;top:275px;letter-spacing:-.18px">Астана, Павлодар 013</span><div class="abs" style="left:0px;top:289px;"><svg width="17" height="17" viewBox="0 0 17 17" ><linearGradient id="jg62" x1="0" y1="0" x2="1" y2="1"><stop offset="0" stop-color="#ffffff"/><stop offset=".5" stop-color="#eef4ff"/><stop offset="1" stop-color="#9cbcf0"/></linearGradient><linearGradient id="jp62" x1="0" y1="0" x2="0" y2="1"><stop offset="0" stop-color="#f8a030"/><stop offset=".24" stop-color="#f07828"/><stop offset=".32" stop-color="#d43c1c"/><stop offset=".44" stop-color="#f08030"/><stop offset=".72" stop-color="#f4a860"/><stop offset="1" stop-color="#c89cc0"/></linearGradient><path d="M2.5 .9H10.8L14.6 4.4V15.2H2.5Z" fill="url(#jg62)" stroke="#6c92d8" stroke-width=".9"/><path d="M14.7 4.6V15.3H2.8" fill="none" stroke="#44546e" stroke-width="1" opacity=".85"/><path d="M10.6 1.4L13.8 4.2H10.6Z" fill="#2a90f0"/><rect x="4.2" y="4.2" width="8" height="8" fill="url(#jp62)"/><rect x="8.2" y="9" width="3.4" height="3" fill="#ffe468" opacity=".9"/><rect x="4.4" y="10.2" width="3.2" height="1.9" fill="#6c5cc4" opacity=".85"/><rect x="5.7" y="5.6" width="1.4" height="5" fill="#3a2030" opacity=".75"/><path d="M3 15.9H15" stroke="#8a96b8" stroke-width=".7" opacity=".5"/></svg></div><span class="abs nw fl" style="left:18px;top:292px;letter-spacing:-.18px">Астана, Павлодар 016</span><div class="abs" style="left:0px;top:306px;"><svg width="17" height="17" viewBox="0 0 17 17" ><linearGradient id="jg63" x1="0" y1="0" x2="1" y2="1"><stop offset="0" stop-color="#ffffff"/><stop offset=".5" stop-color="#eef4ff"/><stop offset="1" stop-color="#9cbcf0"/></linearGradient><linearGradient id="jp63" x1="0" y1="0" x2="0" y2="1"><stop offset="0" stop-color="#f8a030"/><stop offset=".24" stop-color="#f07828"/><stop offset=".32" stop-color="#d43c1c"/><stop offset=".44" stop-color="#f08030"/><stop offset=".72" stop-color="#f4a860"/><stop offset="1" stop-color="#c89cc0"/></linearGradient><path d="M2.5 .9H10.8L14.6 4.4V15.2H2.5Z" fill="url(#jg63)" stroke="#6c92d8" stroke-width=".9"/><path d="M14.7 4.6V15.3H2.8" fill="none" stroke="#44546e" stroke-width="1" opacity=".85"/><path d="M10.6 1.4L13.8 4.2H10.6Z" fill="#2a90f0"/><rect x="4.2" y="4.2" width="8" height="8" fill="url(#jp63)"/><rect x="8.2" y="9" width="3.4" height="3" fill="#ffe468" opacity=".9"/><rect x="4.4" y="10.2" width="3.2" height="1.9" fill="#6c5cc4" opacity=".85"/><rect x="5.7" y="5.6" width="1.4" height="5" fill="#3a2030" opacity=".75"/><path d="M3 15.9H15" stroke="#8a96b8" stroke-width=".7" opacity=".5"/></svg></div><span class="abs nw fl" style="left:18px;top:309px;letter-spacing:-.18px">Астана, Павлодар 017</span><div class="abs" style="left:0px;top:323px;"><svg width="17" height="17" viewBox="0 0 17 17" ><linearGradient id="jg64" x1="0" y1="0" x2="1" y2="1"><stop offset="0" stop-color="#ffffff"/><stop offset=".5" stop-color="#eef4ff"/><stop offset="1" stop-color="#9cbcf0"/></linearGradient><linearGradient id="jp64" x1="0" y1="0" x2="0" y2="1"><stop offset="0" stop-color="#f8a030"/><stop offset=".24" stop-color="#f07828"/><stop offset=".32" stop-color="#d43c1c"/><stop offset=".44" stop-color="#f08030"/><stop offset=".72" stop-color="#f4a860"/><stop offset="1" stop-color="#c89cc0"/></linearGradient><path d="M2.5 .9H10.8L14.6 4.4V15.2H2.5Z" fill="url(#jg64)" stroke="#6c92d8" stroke-width=".9"/><path d="M14.7 4.6V15.3H2.8" fill="none" stroke="#44546e" stroke-width="1" opacity=".85"/><path d="M10.6 1.4L13.8 4.2H10.6Z" fill="#2a90f0"/><rect x="4.2" y="4.2" width="8" height="8" fill="url(#jp64)"/><rect x="8.2" y="9" width="3.4" height="3" fill="#ffe468" opacity=".9"/><rect x="4.4" y="10.2" width="3.2" height="1.9" fill="#6c5cc4" opacity=".85"/><rect x="5.7" y="5.6" width="1.4" height="5" fill="#3a2030" opacity=".75"/><path d="M3 15.9H15" stroke="#8a96b8" stroke-width=".7" opacity=".5"/></svg></div><span class="abs nw fl" style="left:18px;top:326px;letter-spacing:-.18px">Астана, Павлодар 018</span></div></div><div class="hsb" style="left:241px;top:428px;width:295px;height:17px"><div class="sbtn" style="left:1px;top:1px"><svg width="15" height="15" viewBox="0 0 15 15"><path d="M9.5 3.5L5.5 7.5L9.5 11.5" fill="none" stroke="#4d6185" stroke-width="2"/></svg></div><div class="sthumb" style="left:18px;top:1px;width:16px"><i></i></div><div class="sbtn" style="right:1px;top:1px"><svg width="15" height="15" viewBox="0 0 15 15"><path d="M5.5 3.5L9.5 7.5L5.5 11.5" fill="none" stroke="#4d6185" stroke-width="2"/></svg></div></div></div></div>

<!-- taskbar -->
<div id="taskbar" class="abs" style="left:0;top:738px;width:1024px;height:29px"><div class="start"><div class="abs" style="left:9px;top:4px"><svg width="21" height="21" viewBox="0 0 20 20" ><path d="M3.5 2.4Q7 .6 10.6 2.6L9.4 9.2Q6 7.4 2.4 9Z" fill="#f0622a"/><path d="M11.8 3.2Q15.4 5 19 3L17.8 9.6Q14.2 11.6 10.6 9.8Z" fill="#6cbb3a"/><path d="M2.2 10.2Q5.8 8.6 9.2 10.4L8 17Q4.6 15.2 1 17Z" fill="#4a9ae8"/><path d="M10.4 11Q14 12.8 17.6 10.8L16.4 17.4Q12.8 19.4 9.2 17.6Z" fill="#f6c22a"/></svg></div><span class="abs nw" style="left:34px;top:4px;transform:scaleX(.92);transform-origin:0 0">пуск</span></div><div class="tbtn on" style="left:106px;width:158px"><div class="abs" style="left:10px;top:4px;"><svg width="15" height="15" viewBox="0 0 16 16" ><path d="M.6 13.6V3.4Q.6 2.4 1.8 2.4H4.4V13.6Z" fill="#f2c648" stroke="#c48e1c" stroke-width="1"/><rect x="4.4" y=".4" width="9.4" height="8.4" fill="#fff" stroke="#9fb2d6" stroke-width=".7"/><path d="M11.2 .4L13.8 3H11.2Z" fill="#4aa0f0"/><path d="M5.8 2.3H10M5.8 4.3H12" stroke="#78a8e8" stroke-width="1"/><path d="M.7 13.7V7H3.2V6.8H15V13.7Z" fill="#f2c648" stroke="#c48e1c" stroke-width="1"/><rect x="3.3" y="7.1" width="11.2" height="5.4" fill="#e6edf4"/><path d="M3.3 7.3H14.5" stroke="#fff" stroke-width=".8"/><path d="M5 8.9H11" stroke="#78a8e8" stroke-width="1"/><path d="M.4 14.3H15.4" stroke="#a87810" stroke-width="1"/></svg></div><span class="abs nw" style="left:29px;top:6px">Мои документы</span></div><div class="tbtn" style="left:266px;width:158px"><div class="abs" style="left:8px;top:3px;"><svg width="18" height="17" viewBox="0 0 18 17" ><linearGradient id="wg67" x1="0" y1="0" x2="1" y2="1"><stop offset="0" stop-color="#ffffff"/><stop offset=".55" stop-color="#dce8fb"/><stop offset="1" stop-color="#8fb4ee"/></linearGradient><path d="M4.8 .8H13.2L16.3 3.9V15.2H4.8Z" fill="url(#wg67)" stroke="#6f8fc4" stroke-width=".9"/><path d="M16.4 4V15.3H4.8" fill="none" stroke="#34507c" stroke-width="1"/><path d="M13.2 .8V3.9H16.3" fill="#f4f8ff" stroke="#4d6a9a" stroke-width=".7"/><path d="M7.5 12H14M7.5 13.6H12.6" stroke="#7d9fd8" stroke-width=".8"/><path d="M11.8 4.4H13.6V9.6H11.8" fill="none" stroke="#9db8e4" stroke-width=".7"/><rect x="1.75" y="1.75" width="8.7" height="8.4" fill="#fff" stroke="#1d47b0" stroke-width="1.1"/><path d="M3.2 3.2L4.5 8.7L6.1 4.6L7.5 8.7L9.2 3.2" fill="none" stroke="#14309a" stroke-width="1.8" stroke-linejoin="miter"/></svg></div><span class="abs nw" style="left:29px;top:6px;letter-spacing:-.05px">11 Windows_каз - Mi...</span></div><div class="abs" style="left:842px;top:8px;width:16px;height:16px;background:#3d71d6"></div><span class="abs nw" style="left:843px;top:10px;color:#fff">RU</span><div class="tray" style="left:877px;width:147px"><div class="abs" style="left:-9px;top:6px;"><svg width="19" height="19" viewBox="0 0 19 19" ><radialGradient id="te68" cx=".4" cy=".35" r=".75"><stop offset="0" stop-color="#8fc4ff"/><stop offset=".6" stop-color="#3f8ff0"/><stop offset="1" stop-color="#1a5fd0"/></radialGradient><circle cx="9.5" cy="9.5" r="8.6" fill="url(#te68)" stroke="#cfe4ff" stroke-width="1"/><path d="M11.2 5.4L7.2 9.5L11.2 13.6" fill="none" stroke="#fff" stroke-width="2.2"/></svg></div><div class="abs" style="left:11px;top:7px;"><svg width="16" height="16" viewBox="0 0 16 16" ><circle cx="8" cy="8" r="6.6" fill="#ffd8d8" stroke="#e23a3a" stroke-width="2"/><circle cx="8" cy="8" r="2.6" fill="#fff" stroke="#e23a3a" stroke-width="1.6"/><path d="M10.6 5.6V9.6Q11.4 11 12.8 9.8" fill="none" stroke="#e23a3a" stroke-width="1.4"/></svg></div><div class="abs" style="left:28px;top:7px;"><svg width="16" height="16" viewBox="0 0 16 16" ><rect x="0" y="0" width="16" height="16" fill="#fff"/><path d="M1 1H5V15H1Z" fill="#e8141c"/><path d="M5 8L11 1H15.4L9 8L11 10.4L7.6 12Z" fill="#e8141c"/><path d="M8.4 8.6L12.6 12.6L14 11.2V16H9.2L10.8 14.4L6.8 10.2Z" fill="#111"/></svg></div><div class="abs" style="left:47px;top:7px;"><svg width="16" height="17" viewBox="0 0 16 17" ><path d="M1 1.5L12.5 .8L15.4 8.4L4 9.6Z" fill="#222"/><path d="M2.4 2.2L5 2L6.6 8.4L4.6 8.6Z" fill="#e83ad8"/><path d="M5 2L7.6 1.8L9.4 8L6.6 8.4Z" fill="#f0e020"/><path d="M7.6 1.8L10 1.6L12 7.8L9.4 8Z" fill="#30c030"/><path d="M10 1.6L12 1.4L14.2 7.6L12 7.8Z" fill="#2050e0"/><path d="M6 10H12L12.6 13H5.4Z" fill="#c8c8c8" stroke="#666" stroke-width=".6"/><path d="M2.5 13.5H14.5V16H2.5Z" fill="#e8e8e8" stroke="#555" stroke-width=".7"/></svg></div><div class="abs" style="left:65px;top:7px;"><svg width="15" height="17" viewBox="0 0 15 17" ><rect x="1" y="1" width="13" height="10.5" fill="#9a9a9a" stroke="#4a4a4a" stroke-width="1"/><rect x="1.2" y="13" width="5" height="2.6" fill="#8a8a8a" stroke="#444" stroke-width=".6"/><rect x="8.8" y="13" width="5" height="2.6" fill="#8a8a8a" stroke="#444" stroke-width=".6"/></svg></div><div class="abs" style="left:83px;top:7px;"><svg width="15" height="17" viewBox="0 0 15 17" ><linearGradient id="sh73" x1="0" y1="0" x2="1" y2="0"><stop offset="0" stop-color="#f06a6a"/><stop offset=".5" stop-color="#d81818"/><stop offset="1" stop-color="#a01010"/></linearGradient><path d="M7.5 .8Q10.5 2.6 14 2.4Q14.6 11 7.5 16.2Q.4 11 1 2.4Q4.5 2.6 7.5 .8Z" fill="url(#sh73)" stroke="#d8d0d0" stroke-width=".9"/><path d="M5 5.6L10 10.6M10 5.6L5 10.6" stroke="#fff" stroke-width="1.7"/></svg></div><span class="abs nw" style="left:105px;top:9px;color:#fff">14:43</span></div></div>

<!-- caption -->
<div id="cap" class="abs" style="left:0;top:768px;width:1024px;height:56px"><span class="abs nw" style="left:165.1px;top:3px;letter-spacing:0.00px;transform:scaleX(1.060)">Сурет</span> <span class="abs nw" style="left:226.4px;top:3px;letter-spacing:0.00px;transform:scaleX(1.015)">4.</span> <span class="abs nw" style="left:254.7px;top:3px;letter-spacing:0.96px;transform:scaleX(1.070)">Мои</span> <span class="abs nw" style="left:304.7px;top:3px;letter-spacing:0.29px;transform:scaleX(1.070)">документы</span> <span class="abs nw" style="left:412.3px;top:3px;letter-spacing:0.71px;transform:scaleX(1.070)">бумасының</span> <span class="abs nw" style="left:525.3px;top:3px;letter-spacing:0.05px;transform:scaleX(1.070)">толық</span> <span class="abs nw" style="left:590.2px;top:3px;letter-spacing:0.07px;transform:scaleX(1.070)">экранды</span> <span class="abs nw" style="left:676.3px;top:3px;letter-spacing:-0.00px;transform:scaleX(1.062)">терезесі</span> <span class="abs nw" style="left:752.3px;top:3px;letter-spacing:0.48px;transform:scaleX(1.070)">және</span> <span class="abs nw" style="left:254.7px;top:25px;letter-spacing:0.23px;transform:scaleX(1.070)">Корзина</span> <span class="abs nw" style="left:338.5px;top:25px;letter-spacing:0.65px;transform:scaleX(1.070)">бумасының</span> <span class="abs nw" style="left:456.0px;top:25px;letter-spacing:0.19px;transform:scaleX(1.070)">кішірейтілген</span> <span class="abs nw" style="left:586.0px;top:25px;letter-spacing:0.34px;transform:scaleX(1.070)">қалыпты</span> <span class="abs nw" style="left:678.3px;top:25px;letter-spacing:0.26px;transform:scaleX(1.070)">терезесі.</span> </div>

</body>
</html>
